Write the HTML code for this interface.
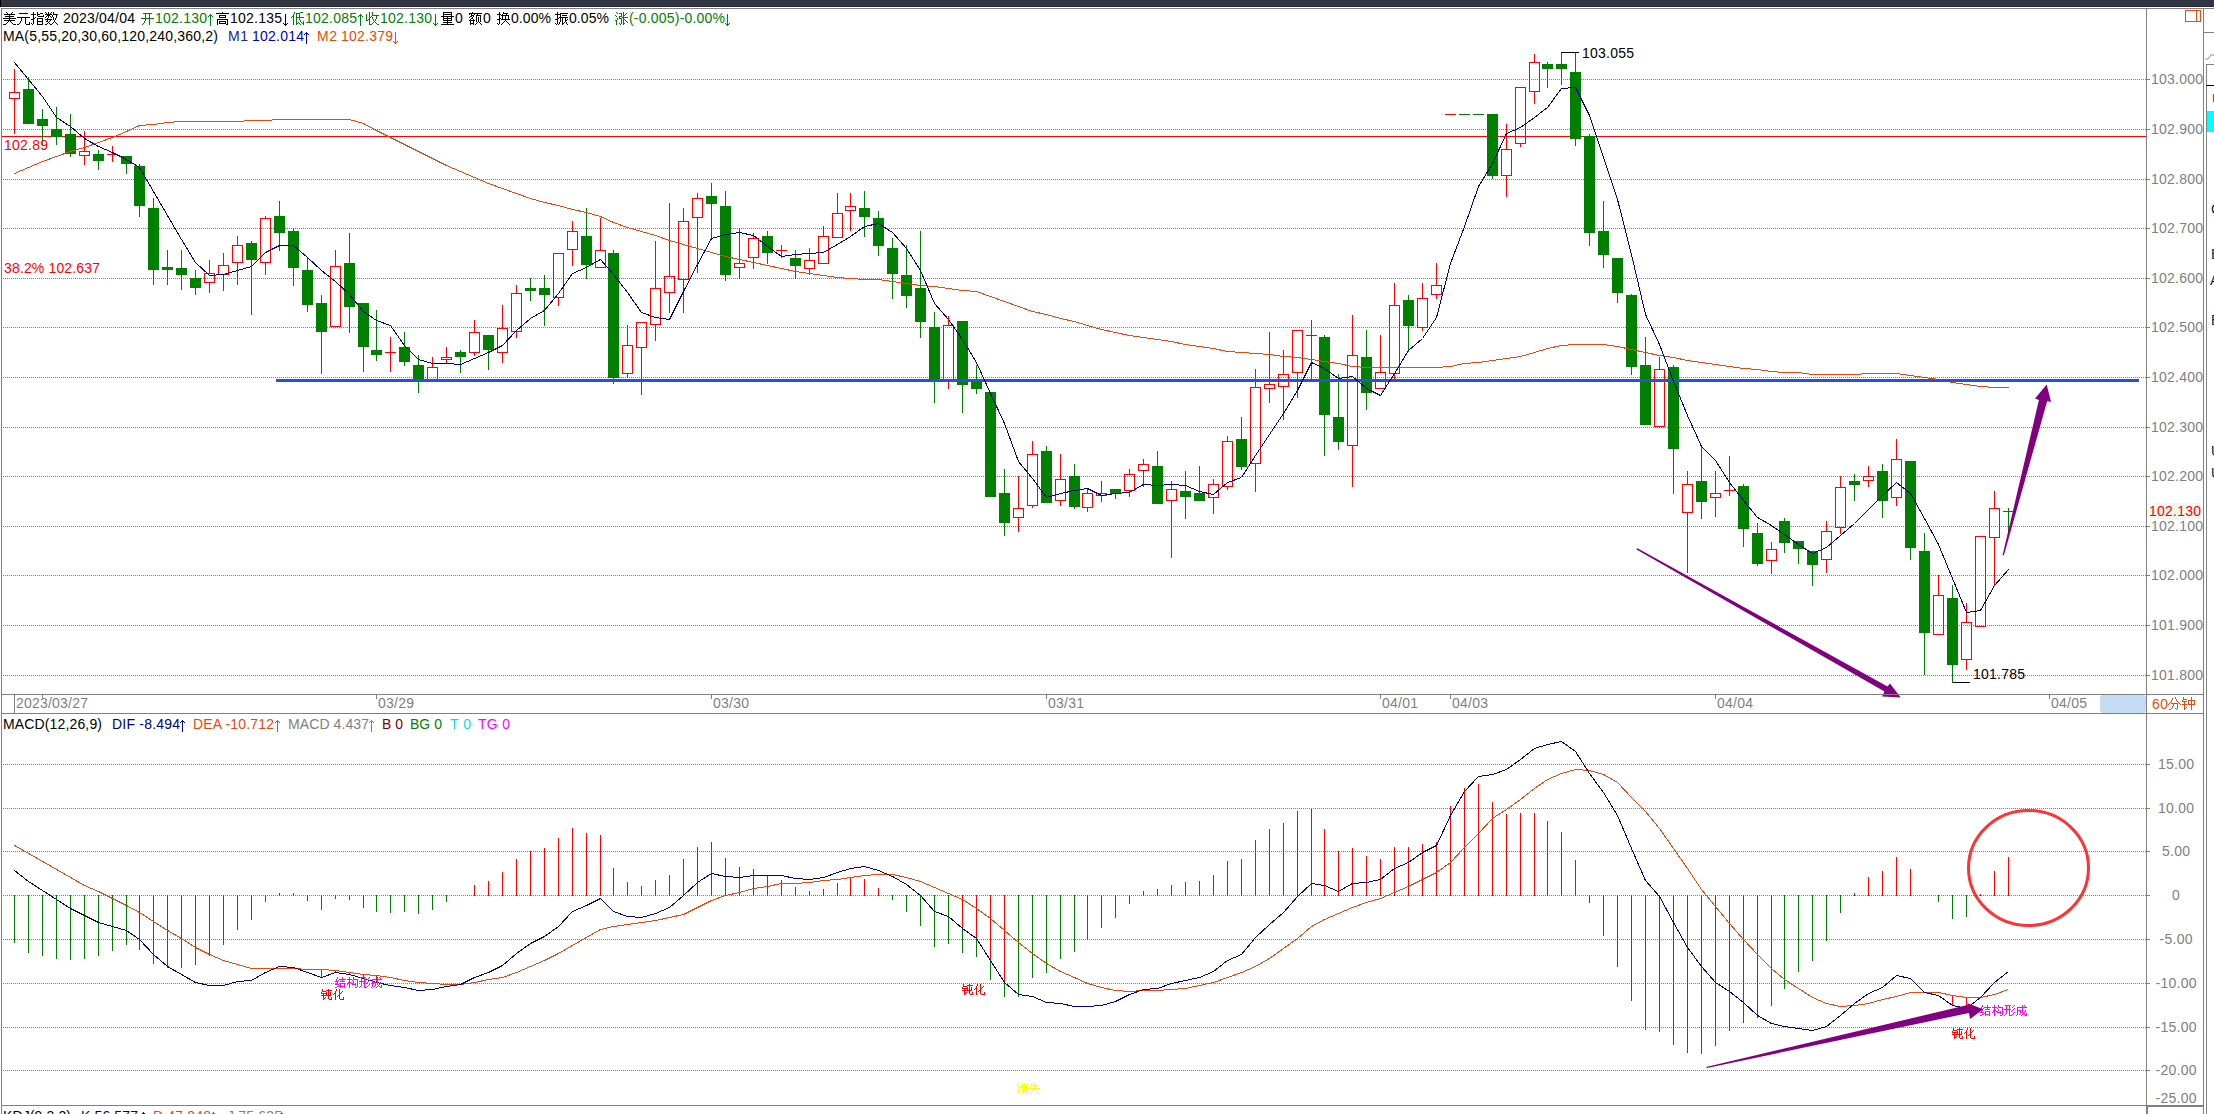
<!DOCTYPE html>
<html><head><meta charset="utf-8">
<style>
html,body{margin:0;padding:0;background:#fff;width:2214px;height:1114px;overflow:hidden}
svg{display:block;font-family:"Liberation Sans",sans-serif}
</style></head>
<body><svg width="2214" height="1114" viewBox="0 0 2214 1114">
<rect x="0" y="0" width="2214" height="1114" fill="#fff"/>
<rect x="0" y="0" width="2214" height="7" fill="#323642"/>
<rect x="0" y="6" width="2214" height="1" fill="#22252f"/>
<rect x="0" y="0" width="1" height="7" fill="#000000"/>
<rect x="1" y="8" width="2213" height="1" fill="#808080"/>
<rect x="1" y="8" width="1" height="1106" fill="#808080"/>
<rect x="2146" y="8" width="1" height="1106" fill="#808080"/>
<rect x="2203" y="8" width="1" height="1106" fill="#808080"/>
<rect x="2206" y="64" width="1" height="1050" fill="#808080"/>
<g stroke="#808080" stroke-width="1" stroke-dasharray="1 1" shape-rendering="crispEdges">
<line x1="3" y1="79.5" x2="2146" y2="79.5"/>
<line x1="3" y1="129.5" x2="2146" y2="129.5"/>
<line x1="3" y1="179.5" x2="2146" y2="179.5"/>
<line x1="3" y1="228.5" x2="2146" y2="228.5"/>
<line x1="3" y1="278.5" x2="2146" y2="278.5"/>
<line x1="3" y1="327.5" x2="2146" y2="327.5"/>
<line x1="3" y1="377.5" x2="2146" y2="377.5"/>
<line x1="3" y1="427.5" x2="2146" y2="427.5"/>
<line x1="3" y1="476.5" x2="2146" y2="476.5"/>
<line x1="3" y1="526.5" x2="2146" y2="526.5"/>
<line x1="3" y1="575.5" x2="2146" y2="575.5"/>
<line x1="3" y1="625.5" x2="2146" y2="625.5"/>
<line x1="3" y1="675.5" x2="2146" y2="675.5"/>
</g>
<rect x="2146" y="79" width="4" height="1" fill="#808080"/>
<rect x="2146" y="129" width="4" height="1" fill="#808080"/>
<rect x="2146" y="179" width="4" height="1" fill="#808080"/>
<rect x="2146" y="228" width="4" height="1" fill="#808080"/>
<rect x="2146" y="278" width="4" height="1" fill="#808080"/>
<rect x="2146" y="327" width="4" height="1" fill="#808080"/>
<rect x="2146" y="377" width="4" height="1" fill="#808080"/>
<rect x="2146" y="427" width="4" height="1" fill="#808080"/>
<rect x="2146" y="476" width="4" height="1" fill="#808080"/>
<rect x="2146" y="526" width="4" height="1" fill="#808080"/>
<rect x="2146" y="575" width="4" height="1" fill="#808080"/>
<rect x="2146" y="625" width="4" height="1" fill="#808080"/>
<rect x="2146" y="675" width="4" height="1" fill="#808080"/>
<rect x="2" y="136" width="2144" height="1" fill="#ff0000"/>
<g shape-rendering="crispEdges">
<rect x="14" y="69" width="1" height="23" fill="#ff0000"/>
<rect x="14" y="99" width="1" height="35" fill="#ff0000"/>
<rect x="9" y="92" width="11" height="1" fill="#ff0000"/>
<rect x="9" y="98" width="11" height="1" fill="#ff0000"/>
<rect x="9" y="92" width="1" height="7" fill="#ff0000"/>
<rect x="19" y="92" width="1" height="7" fill="#ff0000"/>
<rect x="28" y="77" width="1" height="12" fill="#008000"/>
<rect x="23" y="89" width="11" height="35" fill="#008000"/>
<rect x="42" y="109" width="1" height="10" fill="#008000"/>
<rect x="42" y="126" width="1" height="20" fill="#008000"/>
<rect x="37" y="119" width="11" height="7" fill="#008000"/>
<rect x="56" y="107" width="1" height="22" fill="#008000"/>
<rect x="56" y="137" width="1" height="8" fill="#008000"/>
<rect x="51" y="129" width="11" height="8" fill="#008000"/>
<rect x="70" y="114" width="1" height="20" fill="#008000"/>
<rect x="70" y="154" width="1" height="3" fill="#008000"/>
<rect x="65" y="134" width="11" height="20" fill="#008000"/>
<rect x="84" y="131" width="1" height="20" fill="#ff0000"/>
<rect x="84" y="156" width="1" height="9" fill="#ff0000"/>
<rect x="79" y="151" width="11" height="1" fill="#ff0000"/>
<rect x="79" y="155" width="11" height="1" fill="#ff0000"/>
<rect x="79" y="151" width="1" height="5" fill="#ff0000"/>
<rect x="89" y="151" width="1" height="5" fill="#ff0000"/>
<rect x="98" y="150" width="1" height="4" fill="#008000"/>
<rect x="98" y="161" width="1" height="9" fill="#008000"/>
<rect x="93" y="154" width="11" height="7" fill="#008000"/>
<rect x="112" y="146" width="1" height="8" fill="#ff0000"/>
<rect x="112" y="155" width="1" height="7" fill="#ff0000"/>
<rect x="107" y="154" width="11" height="1" fill="#ff0000"/>
<rect x="126" y="164" width="1" height="10" fill="#008000"/>
<rect x="121" y="156" width="11" height="8" fill="#008000"/>
<rect x="139" y="164" width="1" height="2" fill="#008000"/>
<rect x="139" y="206" width="1" height="11" fill="#008000"/>
<rect x="134" y="166" width="11" height="40" fill="#008000"/>
<rect x="153" y="198" width="1" height="10" fill="#008000"/>
<rect x="153" y="270" width="1" height="15" fill="#008000"/>
<rect x="148" y="208" width="11" height="62" fill="#008000"/>
<rect x="167" y="250" width="1" height="17" fill="#008000"/>
<rect x="167" y="270" width="1" height="15" fill="#008000"/>
<rect x="162" y="267" width="11" height="3" fill="#008000"/>
<rect x="181" y="250" width="1" height="18" fill="#008000"/>
<rect x="181" y="275" width="1" height="15" fill="#008000"/>
<rect x="176" y="268" width="11" height="7" fill="#008000"/>
<rect x="195" y="270" width="1" height="8" fill="#008000"/>
<rect x="195" y="288" width="1" height="7" fill="#008000"/>
<rect x="190" y="278" width="11" height="10" fill="#008000"/>
<rect x="209" y="260" width="1" height="13" fill="#ff0000"/>
<rect x="209" y="283" width="1" height="10" fill="#ff0000"/>
<rect x="204" y="273" width="11" height="1" fill="#ff0000"/>
<rect x="204" y="282" width="11" height="1" fill="#ff0000"/>
<rect x="204" y="273" width="1" height="10" fill="#ff0000"/>
<rect x="214" y="273" width="1" height="10" fill="#ff0000"/>
<rect x="223" y="253" width="1" height="12" fill="#ff0000"/>
<rect x="223" y="275" width="1" height="16" fill="#ff0000"/>
<rect x="218" y="265" width="11" height="1" fill="#ff0000"/>
<rect x="218" y="274" width="11" height="1" fill="#ff0000"/>
<rect x="218" y="265" width="1" height="10" fill="#ff0000"/>
<rect x="228" y="265" width="1" height="10" fill="#ff0000"/>
<rect x="237" y="236" width="1" height="9" fill="#ff0000"/>
<rect x="237" y="263" width="1" height="22" fill="#ff0000"/>
<rect x="232" y="245" width="11" height="1" fill="#ff0000"/>
<rect x="232" y="262" width="11" height="1" fill="#ff0000"/>
<rect x="232" y="245" width="1" height="18" fill="#ff0000"/>
<rect x="242" y="245" width="1" height="18" fill="#ff0000"/>
<rect x="251" y="241" width="1" height="2" fill="#008000"/>
<rect x="251" y="260" width="1" height="55" fill="#008000"/>
<rect x="246" y="243" width="11" height="17" fill="#008000"/>
<rect x="265" y="216" width="1" height="2" fill="#ff0000"/>
<rect x="265" y="263" width="1" height="12" fill="#ff0000"/>
<rect x="260" y="218" width="11" height="1" fill="#ff0000"/>
<rect x="260" y="262" width="11" height="1" fill="#ff0000"/>
<rect x="260" y="218" width="1" height="45" fill="#ff0000"/>
<rect x="270" y="218" width="1" height="45" fill="#ff0000"/>
<rect x="279" y="201" width="1" height="15" fill="#008000"/>
<rect x="279" y="233" width="1" height="18" fill="#008000"/>
<rect x="274" y="216" width="11" height="17" fill="#008000"/>
<rect x="293" y="228" width="1" height="3" fill="#008000"/>
<rect x="293" y="268" width="1" height="18" fill="#008000"/>
<rect x="288" y="231" width="11" height="37" fill="#008000"/>
<rect x="307" y="258" width="1" height="12" fill="#008000"/>
<rect x="307" y="305" width="1" height="7" fill="#008000"/>
<rect x="302" y="270" width="11" height="35" fill="#008000"/>
<rect x="321" y="295" width="1" height="8" fill="#008000"/>
<rect x="321" y="332" width="1" height="42" fill="#008000"/>
<rect x="316" y="303" width="11" height="29" fill="#008000"/>
<rect x="335" y="250" width="1" height="16" fill="#ff0000"/>
<rect x="330" y="266" width="11" height="1" fill="#ff0000"/>
<rect x="330" y="326" width="11" height="1" fill="#ff0000"/>
<rect x="330" y="266" width="1" height="61" fill="#ff0000"/>
<rect x="340" y="266" width="1" height="61" fill="#ff0000"/>
<rect x="349" y="233" width="1" height="30" fill="#008000"/>
<rect x="349" y="307" width="1" height="26" fill="#008000"/>
<rect x="344" y="263" width="11" height="44" fill="#008000"/>
<rect x="363" y="347" width="1" height="25" fill="#008000"/>
<rect x="358" y="303" width="11" height="44" fill="#008000"/>
<rect x="376" y="310" width="1" height="40" fill="#008000"/>
<rect x="376" y="355" width="1" height="6" fill="#008000"/>
<rect x="371" y="350" width="11" height="5" fill="#008000"/>
<rect x="390" y="337" width="1" height="15" fill="#ff0000"/>
<rect x="390" y="353" width="1" height="19" fill="#ff0000"/>
<rect x="385" y="352" width="11" height="1" fill="#ff0000"/>
<rect x="404" y="332" width="1" height="15" fill="#008000"/>
<rect x="404" y="362" width="1" height="4" fill="#008000"/>
<rect x="399" y="347" width="11" height="15" fill="#008000"/>
<rect x="418" y="355" width="1" height="10" fill="#008000"/>
<rect x="418" y="380" width="1" height="13" fill="#008000"/>
<rect x="413" y="365" width="11" height="15" fill="#008000"/>
<rect x="432" y="357" width="1" height="10" fill="#ff0000"/>
<rect x="427" y="367" width="11" height="1" fill="#ff0000"/>
<rect x="427" y="380" width="11" height="1" fill="#ff0000"/>
<rect x="427" y="367" width="1" height="14" fill="#ff0000"/>
<rect x="437" y="367" width="1" height="14" fill="#ff0000"/>
<rect x="446" y="347" width="1" height="10" fill="#ff0000"/>
<rect x="446" y="360" width="1" height="3" fill="#ff0000"/>
<rect x="441" y="357" width="11" height="1" fill="#ff0000"/>
<rect x="441" y="359" width="11" height="1" fill="#ff0000"/>
<rect x="441" y="357" width="1" height="3" fill="#ff0000"/>
<rect x="451" y="357" width="1" height="3" fill="#ff0000"/>
<rect x="460" y="350" width="1" height="2" fill="#008000"/>
<rect x="460" y="357" width="1" height="16" fill="#008000"/>
<rect x="455" y="352" width="11" height="5" fill="#008000"/>
<rect x="474" y="320" width="1" height="12" fill="#ff0000"/>
<rect x="474" y="353" width="1" height="3" fill="#ff0000"/>
<rect x="469" y="332" width="11" height="1" fill="#ff0000"/>
<rect x="469" y="352" width="11" height="1" fill="#ff0000"/>
<rect x="469" y="332" width="1" height="21" fill="#ff0000"/>
<rect x="479" y="332" width="1" height="21" fill="#ff0000"/>
<rect x="488" y="350" width="1" height="20" fill="#008000"/>
<rect x="483" y="335" width="11" height="15" fill="#008000"/>
<rect x="502" y="305" width="1" height="23" fill="#ff0000"/>
<rect x="502" y="353" width="1" height="10" fill="#ff0000"/>
<rect x="497" y="328" width="11" height="1" fill="#ff0000"/>
<rect x="497" y="352" width="11" height="1" fill="#ff0000"/>
<rect x="497" y="328" width="1" height="25" fill="#ff0000"/>
<rect x="507" y="328" width="1" height="25" fill="#ff0000"/>
<rect x="516" y="285" width="1" height="8" fill="#ff0000"/>
<rect x="516" y="332" width="1" height="6" fill="#ff0000"/>
<rect x="511" y="293" width="11" height="1" fill="#ff0000"/>
<rect x="511" y="331" width="11" height="1" fill="#ff0000"/>
<rect x="511" y="293" width="1" height="39" fill="#ff0000"/>
<rect x="521" y="293" width="1" height="39" fill="#ff0000"/>
<rect x="530" y="278" width="1" height="10" fill="#008000"/>
<rect x="530" y="291" width="1" height="10" fill="#008000"/>
<rect x="525" y="288" width="11" height="3" fill="#008000"/>
<rect x="544" y="275" width="1" height="13" fill="#008000"/>
<rect x="544" y="295" width="1" height="31" fill="#008000"/>
<rect x="539" y="288" width="11" height="7" fill="#008000"/>
<rect x="558" y="298" width="1" height="8" fill="#ff0000"/>
<rect x="553" y="253" width="11" height="1" fill="#ff0000"/>
<rect x="553" y="297" width="11" height="1" fill="#ff0000"/>
<rect x="553" y="253" width="1" height="45" fill="#ff0000"/>
<rect x="563" y="253" width="1" height="45" fill="#ff0000"/>
<rect x="572" y="221" width="1" height="10" fill="#ff0000"/>
<rect x="572" y="250" width="1" height="16" fill="#ff0000"/>
<rect x="567" y="231" width="11" height="1" fill="#ff0000"/>
<rect x="567" y="249" width="11" height="1" fill="#ff0000"/>
<rect x="567" y="231" width="1" height="19" fill="#ff0000"/>
<rect x="577" y="231" width="1" height="19" fill="#ff0000"/>
<rect x="586" y="208" width="1" height="28" fill="#008000"/>
<rect x="586" y="265" width="1" height="14" fill="#008000"/>
<rect x="581" y="236" width="11" height="29" fill="#008000"/>
<rect x="600" y="218" width="1" height="32" fill="#ff0000"/>
<rect x="595" y="250" width="11" height="1" fill="#ff0000"/>
<rect x="595" y="267" width="11" height="1" fill="#ff0000"/>
<rect x="595" y="250" width="1" height="18" fill="#ff0000"/>
<rect x="605" y="250" width="1" height="18" fill="#ff0000"/>
<rect x="613" y="250" width="1" height="3" fill="#008000"/>
<rect x="613" y="378" width="1" height="6" fill="#008000"/>
<rect x="608" y="253" width="11" height="125" fill="#008000"/>
<rect x="627" y="325" width="1" height="20" fill="#ff0000"/>
<rect x="627" y="374" width="1" height="4" fill="#ff0000"/>
<rect x="622" y="345" width="11" height="1" fill="#ff0000"/>
<rect x="622" y="373" width="11" height="1" fill="#ff0000"/>
<rect x="622" y="345" width="1" height="29" fill="#ff0000"/>
<rect x="632" y="345" width="1" height="29" fill="#ff0000"/>
<rect x="641" y="348" width="1" height="47" fill="#ff0000"/>
<rect x="636" y="322" width="11" height="1" fill="#ff0000"/>
<rect x="636" y="347" width="11" height="1" fill="#ff0000"/>
<rect x="636" y="322" width="1" height="26" fill="#ff0000"/>
<rect x="646" y="322" width="1" height="26" fill="#ff0000"/>
<rect x="655" y="241" width="1" height="47" fill="#ff0000"/>
<rect x="655" y="325" width="1" height="16" fill="#ff0000"/>
<rect x="650" y="288" width="11" height="1" fill="#ff0000"/>
<rect x="650" y="324" width="11" height="1" fill="#ff0000"/>
<rect x="650" y="288" width="1" height="37" fill="#ff0000"/>
<rect x="660" y="288" width="1" height="37" fill="#ff0000"/>
<rect x="669" y="203" width="1" height="73" fill="#ff0000"/>
<rect x="669" y="293" width="1" height="20" fill="#ff0000"/>
<rect x="664" y="276" width="11" height="1" fill="#ff0000"/>
<rect x="664" y="292" width="11" height="1" fill="#ff0000"/>
<rect x="664" y="276" width="1" height="17" fill="#ff0000"/>
<rect x="674" y="276" width="1" height="17" fill="#ff0000"/>
<rect x="683" y="208" width="1" height="13" fill="#ff0000"/>
<rect x="683" y="280" width="1" height="33" fill="#ff0000"/>
<rect x="678" y="221" width="11" height="1" fill="#ff0000"/>
<rect x="678" y="279" width="11" height="1" fill="#ff0000"/>
<rect x="678" y="221" width="1" height="59" fill="#ff0000"/>
<rect x="688" y="221" width="1" height="59" fill="#ff0000"/>
<rect x="697" y="193" width="1" height="5" fill="#ff0000"/>
<rect x="697" y="218" width="1" height="55" fill="#ff0000"/>
<rect x="692" y="198" width="11" height="1" fill="#ff0000"/>
<rect x="692" y="217" width="11" height="1" fill="#ff0000"/>
<rect x="692" y="198" width="1" height="20" fill="#ff0000"/>
<rect x="702" y="198" width="1" height="20" fill="#ff0000"/>
<rect x="711" y="183" width="1" height="13" fill="#008000"/>
<rect x="711" y="204" width="1" height="34" fill="#008000"/>
<rect x="706" y="196" width="11" height="8" fill="#008000"/>
<rect x="725" y="191" width="1" height="15" fill="#008000"/>
<rect x="725" y="275" width="1" height="6" fill="#008000"/>
<rect x="720" y="206" width="11" height="69" fill="#008000"/>
<rect x="739" y="228" width="1" height="35" fill="#ff0000"/>
<rect x="739" y="268" width="1" height="11" fill="#ff0000"/>
<rect x="734" y="263" width="11" height="1" fill="#ff0000"/>
<rect x="734" y="267" width="11" height="1" fill="#ff0000"/>
<rect x="734" y="263" width="1" height="5" fill="#ff0000"/>
<rect x="744" y="263" width="1" height="5" fill="#ff0000"/>
<rect x="753" y="233" width="1" height="5" fill="#ff0000"/>
<rect x="753" y="258" width="1" height="11" fill="#ff0000"/>
<rect x="748" y="238" width="11" height="1" fill="#ff0000"/>
<rect x="748" y="257" width="11" height="1" fill="#ff0000"/>
<rect x="748" y="238" width="1" height="20" fill="#ff0000"/>
<rect x="758" y="238" width="1" height="20" fill="#ff0000"/>
<rect x="767" y="231" width="1" height="5" fill="#008000"/>
<rect x="767" y="253" width="1" height="11" fill="#008000"/>
<rect x="762" y="236" width="11" height="17" fill="#008000"/>
<rect x="781" y="245" width="1" height="5" fill="#ff0000"/>
<rect x="781" y="251" width="1" height="7" fill="#ff0000"/>
<rect x="776" y="250" width="11" height="1" fill="#ff0000"/>
<rect x="795" y="250" width="1" height="8" fill="#008000"/>
<rect x="795" y="266" width="1" height="13" fill="#008000"/>
<rect x="790" y="258" width="11" height="8" fill="#008000"/>
<rect x="809" y="248" width="1" height="12" fill="#ff0000"/>
<rect x="809" y="269" width="1" height="6" fill="#ff0000"/>
<rect x="804" y="260" width="11" height="1" fill="#ff0000"/>
<rect x="804" y="268" width="11" height="1" fill="#ff0000"/>
<rect x="804" y="260" width="1" height="9" fill="#ff0000"/>
<rect x="814" y="260" width="1" height="9" fill="#ff0000"/>
<rect x="823" y="226" width="1" height="10" fill="#ff0000"/>
<rect x="818" y="236" width="11" height="1" fill="#ff0000"/>
<rect x="818" y="263" width="11" height="1" fill="#ff0000"/>
<rect x="818" y="236" width="1" height="28" fill="#ff0000"/>
<rect x="828" y="236" width="1" height="28" fill="#ff0000"/>
<rect x="837" y="193" width="1" height="20" fill="#ff0000"/>
<rect x="832" y="213" width="11" height="1" fill="#ff0000"/>
<rect x="832" y="237" width="11" height="1" fill="#ff0000"/>
<rect x="832" y="213" width="1" height="25" fill="#ff0000"/>
<rect x="842" y="213" width="1" height="25" fill="#ff0000"/>
<rect x="850" y="193" width="1" height="13" fill="#ff0000"/>
<rect x="850" y="211" width="1" height="20" fill="#ff0000"/>
<rect x="845" y="206" width="11" height="1" fill="#ff0000"/>
<rect x="845" y="210" width="11" height="1" fill="#ff0000"/>
<rect x="845" y="206" width="1" height="5" fill="#ff0000"/>
<rect x="855" y="206" width="1" height="5" fill="#ff0000"/>
<rect x="864" y="191" width="1" height="17" fill="#008000"/>
<rect x="864" y="217" width="1" height="20" fill="#008000"/>
<rect x="859" y="208" width="11" height="9" fill="#008000"/>
<rect x="878" y="211" width="1" height="7" fill="#008000"/>
<rect x="878" y="246" width="1" height="10" fill="#008000"/>
<rect x="873" y="218" width="11" height="28" fill="#008000"/>
<rect x="892" y="238" width="1" height="10" fill="#008000"/>
<rect x="892" y="274" width="1" height="25" fill="#008000"/>
<rect x="887" y="248" width="11" height="26" fill="#008000"/>
<rect x="906" y="245" width="1" height="30" fill="#008000"/>
<rect x="906" y="296" width="1" height="12" fill="#008000"/>
<rect x="901" y="275" width="11" height="21" fill="#008000"/>
<rect x="920" y="231" width="1" height="57" fill="#008000"/>
<rect x="920" y="322" width="1" height="16" fill="#008000"/>
<rect x="915" y="288" width="11" height="34" fill="#008000"/>
<rect x="934" y="312" width="1" height="15" fill="#008000"/>
<rect x="934" y="380" width="1" height="23" fill="#008000"/>
<rect x="929" y="327" width="11" height="53" fill="#008000"/>
<rect x="948" y="316" width="1" height="9" fill="#ff0000"/>
<rect x="948" y="380" width="1" height="9" fill="#ff0000"/>
<rect x="943" y="325" width="11" height="1" fill="#ff0000"/>
<rect x="943" y="379" width="11" height="1" fill="#ff0000"/>
<rect x="943" y="325" width="1" height="55" fill="#ff0000"/>
<rect x="953" y="325" width="1" height="55" fill="#ff0000"/>
<rect x="962" y="385" width="1" height="28" fill="#008000"/>
<rect x="957" y="321" width="11" height="64" fill="#008000"/>
<rect x="976" y="365" width="1" height="14" fill="#008000"/>
<rect x="976" y="389" width="1" height="5" fill="#008000"/>
<rect x="971" y="379" width="11" height="10" fill="#008000"/>
<rect x="985" y="392" width="11" height="105" fill="#008000"/>
<rect x="1004" y="469" width="1" height="24" fill="#008000"/>
<rect x="1004" y="523" width="1" height="13" fill="#008000"/>
<rect x="999" y="493" width="11" height="30" fill="#008000"/>
<rect x="1018" y="476" width="1" height="32" fill="#ff0000"/>
<rect x="1018" y="518" width="1" height="14" fill="#ff0000"/>
<rect x="1013" y="508" width="11" height="1" fill="#ff0000"/>
<rect x="1013" y="517" width="11" height="1" fill="#ff0000"/>
<rect x="1013" y="508" width="1" height="10" fill="#ff0000"/>
<rect x="1023" y="508" width="1" height="10" fill="#ff0000"/>
<rect x="1032" y="441" width="1" height="13" fill="#ff0000"/>
<rect x="1032" y="506" width="1" height="2" fill="#ff0000"/>
<rect x="1027" y="454" width="11" height="1" fill="#ff0000"/>
<rect x="1027" y="505" width="11" height="1" fill="#ff0000"/>
<rect x="1027" y="454" width="1" height="52" fill="#ff0000"/>
<rect x="1037" y="454" width="1" height="52" fill="#ff0000"/>
<rect x="1046" y="446" width="1" height="5" fill="#008000"/>
<rect x="1041" y="451" width="11" height="52" fill="#008000"/>
<rect x="1060" y="454" width="1" height="25" fill="#ff0000"/>
<rect x="1060" y="501" width="1" height="5" fill="#ff0000"/>
<rect x="1055" y="479" width="11" height="1" fill="#ff0000"/>
<rect x="1055" y="500" width="11" height="1" fill="#ff0000"/>
<rect x="1055" y="479" width="1" height="22" fill="#ff0000"/>
<rect x="1065" y="479" width="1" height="22" fill="#ff0000"/>
<rect x="1074" y="464" width="1" height="12" fill="#008000"/>
<rect x="1074" y="507" width="1" height="2" fill="#008000"/>
<rect x="1069" y="476" width="11" height="31" fill="#008000"/>
<rect x="1087" y="489" width="1" height="4" fill="#ff0000"/>
<rect x="1087" y="508" width="1" height="4" fill="#ff0000"/>
<rect x="1082" y="493" width="11" height="1" fill="#ff0000"/>
<rect x="1082" y="507" width="11" height="1" fill="#ff0000"/>
<rect x="1082" y="493" width="1" height="15" fill="#ff0000"/>
<rect x="1092" y="493" width="1" height="15" fill="#ff0000"/>
<rect x="1101" y="481" width="1" height="12" fill="#ff0000"/>
<rect x="1101" y="496" width="1" height="6" fill="#ff0000"/>
<rect x="1096" y="493" width="11" height="1" fill="#ff0000"/>
<rect x="1096" y="495" width="11" height="1" fill="#ff0000"/>
<rect x="1096" y="493" width="1" height="3" fill="#ff0000"/>
<rect x="1106" y="493" width="1" height="3" fill="#ff0000"/>
<rect x="1115" y="494" width="1" height="5" fill="#008000"/>
<rect x="1110" y="489" width="11" height="5" fill="#008000"/>
<rect x="1129" y="469" width="1" height="5" fill="#ff0000"/>
<rect x="1129" y="491" width="1" height="6" fill="#ff0000"/>
<rect x="1124" y="474" width="11" height="1" fill="#ff0000"/>
<rect x="1124" y="490" width="11" height="1" fill="#ff0000"/>
<rect x="1124" y="474" width="1" height="17" fill="#ff0000"/>
<rect x="1134" y="474" width="1" height="17" fill="#ff0000"/>
<rect x="1143" y="459" width="1" height="5" fill="#ff0000"/>
<rect x="1143" y="471" width="1" height="16" fill="#ff0000"/>
<rect x="1138" y="464" width="11" height="1" fill="#ff0000"/>
<rect x="1138" y="470" width="11" height="1" fill="#ff0000"/>
<rect x="1138" y="464" width="1" height="7" fill="#ff0000"/>
<rect x="1148" y="464" width="1" height="7" fill="#ff0000"/>
<rect x="1157" y="451" width="1" height="15" fill="#008000"/>
<rect x="1152" y="466" width="11" height="38" fill="#008000"/>
<rect x="1171" y="481" width="1" height="8" fill="#ff0000"/>
<rect x="1171" y="501" width="1" height="57" fill="#ff0000"/>
<rect x="1166" y="489" width="11" height="1" fill="#ff0000"/>
<rect x="1166" y="500" width="11" height="1" fill="#ff0000"/>
<rect x="1166" y="489" width="1" height="12" fill="#ff0000"/>
<rect x="1176" y="489" width="1" height="12" fill="#ff0000"/>
<rect x="1185" y="471" width="1" height="20" fill="#008000"/>
<rect x="1185" y="497" width="1" height="22" fill="#008000"/>
<rect x="1180" y="491" width="11" height="6" fill="#008000"/>
<rect x="1199" y="466" width="1" height="27" fill="#008000"/>
<rect x="1194" y="493" width="11" height="8" fill="#008000"/>
<rect x="1213" y="479" width="1" height="5" fill="#ff0000"/>
<rect x="1213" y="498" width="1" height="16" fill="#ff0000"/>
<rect x="1208" y="484" width="11" height="1" fill="#ff0000"/>
<rect x="1208" y="497" width="11" height="1" fill="#ff0000"/>
<rect x="1208" y="484" width="1" height="14" fill="#ff0000"/>
<rect x="1218" y="484" width="1" height="14" fill="#ff0000"/>
<rect x="1227" y="436" width="1" height="5" fill="#ff0000"/>
<rect x="1227" y="487" width="1" height="3" fill="#ff0000"/>
<rect x="1222" y="441" width="11" height="1" fill="#ff0000"/>
<rect x="1222" y="486" width="11" height="1" fill="#ff0000"/>
<rect x="1222" y="441" width="1" height="46" fill="#ff0000"/>
<rect x="1232" y="441" width="1" height="46" fill="#ff0000"/>
<rect x="1241" y="417" width="1" height="22" fill="#008000"/>
<rect x="1241" y="467" width="1" height="3" fill="#008000"/>
<rect x="1236" y="439" width="11" height="28" fill="#008000"/>
<rect x="1255" y="369" width="1" height="18" fill="#ff0000"/>
<rect x="1255" y="464" width="1" height="28" fill="#ff0000"/>
<rect x="1250" y="387" width="11" height="1" fill="#ff0000"/>
<rect x="1250" y="463" width="11" height="1" fill="#ff0000"/>
<rect x="1250" y="387" width="1" height="77" fill="#ff0000"/>
<rect x="1260" y="387" width="1" height="77" fill="#ff0000"/>
<rect x="1269" y="332" width="1" height="52" fill="#ff0000"/>
<rect x="1269" y="389" width="1" height="14" fill="#ff0000"/>
<rect x="1264" y="384" width="11" height="1" fill="#ff0000"/>
<rect x="1264" y="388" width="11" height="1" fill="#ff0000"/>
<rect x="1264" y="384" width="1" height="5" fill="#ff0000"/>
<rect x="1274" y="384" width="1" height="5" fill="#ff0000"/>
<rect x="1283" y="350" width="1" height="24" fill="#ff0000"/>
<rect x="1283" y="387" width="1" height="33" fill="#ff0000"/>
<rect x="1278" y="374" width="11" height="1" fill="#ff0000"/>
<rect x="1278" y="386" width="11" height="1" fill="#ff0000"/>
<rect x="1278" y="374" width="1" height="13" fill="#ff0000"/>
<rect x="1288" y="374" width="1" height="13" fill="#ff0000"/>
<rect x="1297" y="373" width="1" height="25" fill="#ff0000"/>
<rect x="1292" y="330" width="11" height="1" fill="#ff0000"/>
<rect x="1292" y="372" width="11" height="1" fill="#ff0000"/>
<rect x="1292" y="330" width="1" height="43" fill="#ff0000"/>
<rect x="1302" y="330" width="1" height="43" fill="#ff0000"/>
<rect x="1311" y="320" width="1" height="15" fill="#008000"/>
<rect x="1311" y="336" width="1" height="44" fill="#008000"/>
<rect x="1306" y="335" width="11" height="1" fill="#008000"/>
<rect x="1324" y="335" width="1" height="2" fill="#008000"/>
<rect x="1324" y="415" width="1" height="41" fill="#008000"/>
<rect x="1319" y="337" width="11" height="78" fill="#008000"/>
<rect x="1338" y="374" width="1" height="43" fill="#008000"/>
<rect x="1338" y="442" width="1" height="8" fill="#008000"/>
<rect x="1333" y="417" width="11" height="25" fill="#008000"/>
<rect x="1352" y="315" width="1" height="40" fill="#ff0000"/>
<rect x="1352" y="446" width="1" height="41" fill="#ff0000"/>
<rect x="1347" y="355" width="11" height="1" fill="#ff0000"/>
<rect x="1347" y="445" width="11" height="1" fill="#ff0000"/>
<rect x="1347" y="355" width="1" height="91" fill="#ff0000"/>
<rect x="1357" y="355" width="1" height="91" fill="#ff0000"/>
<rect x="1366" y="330" width="1" height="27" fill="#008000"/>
<rect x="1366" y="393" width="1" height="17" fill="#008000"/>
<rect x="1361" y="357" width="11" height="36" fill="#008000"/>
<rect x="1380" y="335" width="1" height="37" fill="#ff0000"/>
<rect x="1375" y="372" width="11" height="1" fill="#ff0000"/>
<rect x="1375" y="388" width="11" height="1" fill="#ff0000"/>
<rect x="1375" y="372" width="1" height="17" fill="#ff0000"/>
<rect x="1385" y="372" width="1" height="17" fill="#ff0000"/>
<rect x="1394" y="283" width="1" height="22" fill="#ff0000"/>
<rect x="1394" y="374" width="1" height="5" fill="#ff0000"/>
<rect x="1389" y="305" width="11" height="1" fill="#ff0000"/>
<rect x="1389" y="373" width="11" height="1" fill="#ff0000"/>
<rect x="1389" y="305" width="1" height="69" fill="#ff0000"/>
<rect x="1399" y="305" width="1" height="69" fill="#ff0000"/>
<rect x="1408" y="295" width="1" height="5" fill="#008000"/>
<rect x="1408" y="326" width="1" height="26" fill="#008000"/>
<rect x="1403" y="300" width="11" height="26" fill="#008000"/>
<rect x="1422" y="283" width="1" height="15" fill="#ff0000"/>
<rect x="1422" y="328" width="1" height="3" fill="#ff0000"/>
<rect x="1417" y="298" width="11" height="1" fill="#ff0000"/>
<rect x="1417" y="327" width="11" height="1" fill="#ff0000"/>
<rect x="1417" y="298" width="1" height="30" fill="#ff0000"/>
<rect x="1427" y="298" width="1" height="30" fill="#ff0000"/>
<rect x="1436" y="263" width="1" height="22" fill="#ff0000"/>
<rect x="1436" y="295" width="1" height="4" fill="#ff0000"/>
<rect x="1431" y="285" width="11" height="1" fill="#ff0000"/>
<rect x="1431" y="294" width="11" height="1" fill="#ff0000"/>
<rect x="1431" y="285" width="1" height="10" fill="#ff0000"/>
<rect x="1441" y="285" width="1" height="10" fill="#ff0000"/>
<rect x="1445" y="114" width="11" height="1" fill="#ff0000"/>
<rect x="1459" y="114" width="11" height="1" fill="#008000"/>
<rect x="1473" y="114" width="11" height="1" fill="#008000"/>
<rect x="1492" y="176" width="1" height="3" fill="#008000"/>
<rect x="1487" y="114" width="11" height="62" fill="#008000"/>
<rect x="1506" y="124" width="1" height="25" fill="#ff0000"/>
<rect x="1506" y="176" width="1" height="21" fill="#ff0000"/>
<rect x="1501" y="149" width="11" height="1" fill="#ff0000"/>
<rect x="1501" y="175" width="11" height="1" fill="#ff0000"/>
<rect x="1501" y="149" width="1" height="27" fill="#ff0000"/>
<rect x="1511" y="149" width="1" height="27" fill="#ff0000"/>
<rect x="1520" y="144" width="1" height="3" fill="#ff0000"/>
<rect x="1515" y="87" width="11" height="1" fill="#ff0000"/>
<rect x="1515" y="143" width="11" height="1" fill="#ff0000"/>
<rect x="1515" y="87" width="1" height="57" fill="#ff0000"/>
<rect x="1525" y="87" width="1" height="57" fill="#ff0000"/>
<rect x="1534" y="54" width="1" height="8" fill="#ff0000"/>
<rect x="1534" y="92" width="1" height="12" fill="#ff0000"/>
<rect x="1529" y="62" width="11" height="1" fill="#ff0000"/>
<rect x="1529" y="91" width="11" height="1" fill="#ff0000"/>
<rect x="1529" y="62" width="1" height="30" fill="#ff0000"/>
<rect x="1539" y="62" width="1" height="30" fill="#ff0000"/>
<rect x="1547" y="62" width="1" height="2" fill="#008000"/>
<rect x="1547" y="69" width="1" height="19" fill="#008000"/>
<rect x="1542" y="64" width="11" height="5" fill="#008000"/>
<rect x="1561" y="52" width="1" height="12" fill="#008000"/>
<rect x="1561" y="69" width="1" height="16" fill="#008000"/>
<rect x="1556" y="64" width="11" height="5" fill="#008000"/>
<rect x="1575" y="52" width="1" height="20" fill="#008000"/>
<rect x="1575" y="139" width="1" height="7" fill="#008000"/>
<rect x="1570" y="72" width="11" height="67" fill="#008000"/>
<rect x="1589" y="134" width="1" height="2" fill="#008000"/>
<rect x="1589" y="233" width="1" height="13" fill="#008000"/>
<rect x="1584" y="136" width="11" height="97" fill="#008000"/>
<rect x="1603" y="201" width="1" height="30" fill="#008000"/>
<rect x="1603" y="255" width="1" height="13" fill="#008000"/>
<rect x="1598" y="231" width="11" height="24" fill="#008000"/>
<rect x="1617" y="293" width="1" height="10" fill="#008000"/>
<rect x="1612" y="258" width="11" height="35" fill="#008000"/>
<rect x="1631" y="294" width="1" height="1" fill="#008000"/>
<rect x="1631" y="367" width="1" height="8" fill="#008000"/>
<rect x="1626" y="295" width="11" height="72" fill="#008000"/>
<rect x="1645" y="337" width="1" height="28" fill="#008000"/>
<rect x="1640" y="365" width="11" height="60" fill="#008000"/>
<rect x="1659" y="357" width="1" height="12" fill="#ff0000"/>
<rect x="1654" y="369" width="11" height="1" fill="#ff0000"/>
<rect x="1654" y="426" width="11" height="1" fill="#ff0000"/>
<rect x="1654" y="369" width="1" height="58" fill="#ff0000"/>
<rect x="1664" y="369" width="1" height="58" fill="#ff0000"/>
<rect x="1673" y="365" width="1" height="2" fill="#008000"/>
<rect x="1673" y="449" width="1" height="45" fill="#008000"/>
<rect x="1668" y="367" width="11" height="82" fill="#008000"/>
<rect x="1687" y="471" width="1" height="13" fill="#ff0000"/>
<rect x="1687" y="513" width="1" height="60" fill="#ff0000"/>
<rect x="1682" y="484" width="11" height="1" fill="#ff0000"/>
<rect x="1682" y="512" width="11" height="1" fill="#ff0000"/>
<rect x="1682" y="484" width="1" height="29" fill="#ff0000"/>
<rect x="1692" y="484" width="1" height="29" fill="#ff0000"/>
<rect x="1701" y="445" width="1" height="36" fill="#008000"/>
<rect x="1701" y="502" width="1" height="17" fill="#008000"/>
<rect x="1696" y="481" width="11" height="21" fill="#008000"/>
<rect x="1715" y="471" width="1" height="22" fill="#ff0000"/>
<rect x="1715" y="498" width="1" height="19" fill="#ff0000"/>
<rect x="1710" y="493" width="11" height="1" fill="#ff0000"/>
<rect x="1710" y="497" width="11" height="1" fill="#ff0000"/>
<rect x="1710" y="493" width="1" height="5" fill="#ff0000"/>
<rect x="1720" y="493" width="1" height="5" fill="#ff0000"/>
<rect x="1729" y="456" width="1" height="34" fill="#ff0000"/>
<rect x="1729" y="491" width="1" height="5" fill="#ff0000"/>
<rect x="1724" y="490" width="11" height="1" fill="#ff0000"/>
<rect x="1743" y="484" width="1" height="2" fill="#008000"/>
<rect x="1743" y="529" width="1" height="18" fill="#008000"/>
<rect x="1738" y="486" width="11" height="43" fill="#008000"/>
<rect x="1757" y="523" width="1" height="10" fill="#008000"/>
<rect x="1757" y="564" width="1" height="2" fill="#008000"/>
<rect x="1752" y="533" width="11" height="31" fill="#008000"/>
<rect x="1771" y="542" width="1" height="7" fill="#ff0000"/>
<rect x="1771" y="561" width="1" height="13" fill="#ff0000"/>
<rect x="1766" y="549" width="11" height="1" fill="#ff0000"/>
<rect x="1766" y="560" width="11" height="1" fill="#ff0000"/>
<rect x="1766" y="549" width="1" height="12" fill="#ff0000"/>
<rect x="1776" y="549" width="1" height="12" fill="#ff0000"/>
<rect x="1784" y="518" width="1" height="3" fill="#008000"/>
<rect x="1784" y="543" width="1" height="10" fill="#008000"/>
<rect x="1779" y="521" width="11" height="22" fill="#008000"/>
<rect x="1798" y="549" width="1" height="15" fill="#008000"/>
<rect x="1793" y="541" width="11" height="8" fill="#008000"/>
<rect x="1812" y="565" width="1" height="21" fill="#008000"/>
<rect x="1807" y="551" width="11" height="14" fill="#008000"/>
<rect x="1826" y="521" width="1" height="10" fill="#ff0000"/>
<rect x="1826" y="560" width="1" height="13" fill="#ff0000"/>
<rect x="1821" y="531" width="11" height="1" fill="#ff0000"/>
<rect x="1821" y="559" width="11" height="1" fill="#ff0000"/>
<rect x="1821" y="531" width="1" height="29" fill="#ff0000"/>
<rect x="1831" y="531" width="1" height="29" fill="#ff0000"/>
<rect x="1840" y="476" width="1" height="11" fill="#ff0000"/>
<rect x="1840" y="528" width="1" height="6" fill="#ff0000"/>
<rect x="1835" y="487" width="11" height="1" fill="#ff0000"/>
<rect x="1835" y="527" width="11" height="1" fill="#ff0000"/>
<rect x="1835" y="487" width="1" height="41" fill="#ff0000"/>
<rect x="1845" y="487" width="1" height="41" fill="#ff0000"/>
<rect x="1854" y="474" width="1" height="7" fill="#008000"/>
<rect x="1854" y="485" width="1" height="16" fill="#008000"/>
<rect x="1849" y="481" width="11" height="4" fill="#008000"/>
<rect x="1868" y="466" width="1" height="10" fill="#ff0000"/>
<rect x="1868" y="481" width="1" height="6" fill="#ff0000"/>
<rect x="1863" y="476" width="11" height="1" fill="#ff0000"/>
<rect x="1863" y="480" width="11" height="1" fill="#ff0000"/>
<rect x="1863" y="476" width="1" height="5" fill="#ff0000"/>
<rect x="1873" y="476" width="1" height="5" fill="#ff0000"/>
<rect x="1882" y="464" width="1" height="7" fill="#008000"/>
<rect x="1882" y="501" width="1" height="17" fill="#008000"/>
<rect x="1877" y="471" width="11" height="30" fill="#008000"/>
<rect x="1896" y="439" width="1" height="20" fill="#ff0000"/>
<rect x="1896" y="498" width="1" height="8" fill="#ff0000"/>
<rect x="1891" y="459" width="11" height="1" fill="#ff0000"/>
<rect x="1891" y="497" width="11" height="1" fill="#ff0000"/>
<rect x="1891" y="459" width="1" height="39" fill="#ff0000"/>
<rect x="1901" y="459" width="1" height="39" fill="#ff0000"/>
<rect x="1910" y="548" width="1" height="12" fill="#008000"/>
<rect x="1905" y="461" width="11" height="87" fill="#008000"/>
<rect x="1924" y="533" width="1" height="18" fill="#008000"/>
<rect x="1924" y="633" width="1" height="42" fill="#008000"/>
<rect x="1919" y="551" width="11" height="82" fill="#008000"/>
<rect x="1938" y="575" width="1" height="20" fill="#ff0000"/>
<rect x="1933" y="595" width="11" height="1" fill="#ff0000"/>
<rect x="1933" y="634" width="11" height="1" fill="#ff0000"/>
<rect x="1933" y="595" width="1" height="40" fill="#ff0000"/>
<rect x="1943" y="595" width="1" height="40" fill="#ff0000"/>
<rect x="1952" y="585" width="1" height="13" fill="#008000"/>
<rect x="1952" y="665" width="1" height="18" fill="#008000"/>
<rect x="1947" y="598" width="11" height="67" fill="#008000"/>
<rect x="1966" y="603" width="1" height="19" fill="#ff0000"/>
<rect x="1966" y="660" width="1" height="10" fill="#ff0000"/>
<rect x="1961" y="622" width="11" height="1" fill="#ff0000"/>
<rect x="1961" y="659" width="11" height="1" fill="#ff0000"/>
<rect x="1961" y="622" width="1" height="38" fill="#ff0000"/>
<rect x="1971" y="622" width="1" height="38" fill="#ff0000"/>
<rect x="1975" y="536" width="11" height="1" fill="#ff0000"/>
<rect x="1975" y="626" width="11" height="1" fill="#ff0000"/>
<rect x="1975" y="536" width="1" height="91" fill="#ff0000"/>
<rect x="1985" y="536" width="1" height="91" fill="#ff0000"/>
<rect x="1994" y="491" width="1" height="17" fill="#ff0000"/>
<rect x="1994" y="538" width="1" height="48" fill="#ff0000"/>
<rect x="1989" y="508" width="11" height="1" fill="#ff0000"/>
<rect x="1989" y="537" width="11" height="1" fill="#ff0000"/>
<rect x="1989" y="508" width="1" height="30" fill="#ff0000"/>
<rect x="1999" y="508" width="1" height="30" fill="#ff0000"/>
<rect x="2008" y="508" width="1" height="3" fill="#008000"/>
<rect x="2008" y="512" width="1" height="20" fill="#008000"/>
<rect x="2003" y="511" width="11" height="1" fill="#008000"/>
</g>
<polyline points="14.5,173.5 28.5,167.5 42.5,161.5 56.5,156.5 70.5,151.5 84.5,147.5 98.5,142.5 112.5,137.5 126.5,131.5 139.5,125.5 153.5,124.5 167.5,122.5 181.5,121.5 195.5,121.5 209.5,121.5 223.5,121.5 237.5,121.5 251.5,120.5 265.5,120.5 279.5,119.5 293.5,119.5 307.5,119.5 321.5,119.5 335.5,119.5 349.5,119.5 363.5,123.5 376.5,130.5 390.5,137.5 404.5,144.5 418.5,151.5 432.5,158.5 446.5,165.5 460.5,171.5 474.5,177.5 488.5,183.5 502.5,188.5 516.5,193.5 530.5,198.5 544.5,202.5 558.5,205.5 572.5,209.5 586.5,212.5 600.5,216.5 613.5,222.5 627.5,227.5 641.5,231.5 655.5,235.5 669.5,240.5 683.5,244.5 697.5,248.5 711.5,252.5 725.5,256.5 739.5,259.5 753.5,262.5 767.5,265.5 781.5,268.5 795.5,271.5 809.5,273.5 823.5,275.5 837.5,277.5 850.5,278.5 864.5,279.5 878.5,279.5 892.5,281.5 906.5,283.5 920.5,285.5 934.5,286.5 948.5,288.5 962.5,290.5 976.5,291.5 990.5,296.5 1004.5,301.5 1018.5,306.5 1032.5,311.5 1046.5,314.5 1060.5,318.5 1074.5,321.5 1087.5,325.5 1101.5,329.5 1115.5,332.5 1129.5,335.5 1143.5,337.5 1157.5,339.5 1171.5,341.5 1185.5,344.5 1199.5,346.5 1213.5,348.5 1227.5,351.5 1241.5,352.5 1255.5,353.5 1269.5,354.5 1283.5,356.5 1297.5,357.5 1311.5,359.5 1324.5,361.5 1338.5,363.5 1352.5,366.5 1366.5,367.5 1380.5,367.5 1394.5,367.5 1408.5,367.5 1422.5,367.5 1436.5,367.5 1450.5,366.5 1464.5,363.5 1478.5,362.5 1492.5,360.5 1506.5,358.5 1520.5,356.5 1534.5,352.5 1547.5,348.5 1561.5,345.5 1575.5,344.5 1589.5,344.5 1603.5,344.5 1617.5,346.5 1631.5,349.5 1645.5,352.5 1659.5,355.5 1673.5,357.5 1687.5,360.5 1701.5,362.5 1715.5,364.5 1729.5,366.5 1743.5,368.5 1757.5,369.5 1771.5,371.5 1784.5,372.5 1798.5,372.5 1812.5,374.5 1826.5,374.5 1840.5,374.5 1854.5,374.5 1868.5,373.5 1882.5,373.5 1896.5,373.5 1910.5,375.5 1924.5,377.5 1938.5,379.5 1952.5,382.5 1966.5,384.5 1980.5,386.5 1994.5,387.5 2008.5,387.5" fill="none" stroke="#e64a0a" stroke-width="1" shape-rendering="crispEdges"/>
<rect x="276" y="379" width="1863" height="3" fill="#2d50d2"/>
<polyline points="14.5,62.5 28.5,79.5 42.5,96.5 56.5,117.5 70.5,126.5 84.5,138.5 98.5,146.5 112.5,152.5 126.5,159.5 139.5,167.5 153.5,191.5 167.5,215.5 181.5,239.5 195.5,262.5 209.5,275.5 223.5,274.5 237.5,270.5 251.5,266.5 265.5,252.5 279.5,245.5 293.5,245.5 307.5,257.5 321.5,270.5 335.5,281.5 349.5,294.5 363.5,311.5 376.5,320.5 390.5,325.5 404.5,345.5 418.5,359.5 432.5,363.5 446.5,363.5 460.5,364.5 474.5,358.5 488.5,352.5 502.5,345.5 516.5,330.5 530.5,318.5 544.5,310.5 558.5,293.5 572.5,273.5 586.5,267.5 600.5,259.5 613.5,274.5 627.5,292.5 641.5,312.5 655.5,317.5 669.5,319.5 683.5,291.5 697.5,264.5 711.5,238.5 725.5,234.5 739.5,232.5 753.5,235.5 767.5,246.5 781.5,256.5 795.5,254.5 809.5,253.5 823.5,252.5 837.5,244.5 850.5,236.5 864.5,226.5 878.5,223.5 892.5,232.5 906.5,248.5 920.5,270.5 934.5,303.5 948.5,319.5 962.5,339.5 976.5,362.5 990.5,393.5 1004.5,423.5 1018.5,461.5 1032.5,478.5 1046.5,497.5 1060.5,493.5 1074.5,490.5 1087.5,488.5 1101.5,495.5 1115.5,493.5 1129.5,492.5 1143.5,484.5 1157.5,485.5 1171.5,484.5 1185.5,485.5 1199.5,491.5 1213.5,494.5 1227.5,482.5 1241.5,477.5 1255.5,455.5 1269.5,434.5 1283.5,413.5 1297.5,390.5 1311.5,362.5 1324.5,368.5 1338.5,378.5 1352.5,376.5 1366.5,388.5 1380.5,395.5 1394.5,373.5 1408.5,350.5 1422.5,338.5 1436.5,317.5 1450.5,263.5 1464.5,226.5 1478.5,186.5 1492.5,163.5 1506.5,133.5 1520.5,127.5 1534.5,117.5 1547.5,107.5 1561.5,88.5 1575.5,87.5 1589.5,115.5 1603.5,157.5 1617.5,199.5 1631.5,254.5 1645.5,314.5 1659.5,344.5 1673.5,381.5 1687.5,415.5 1701.5,446.5 1715.5,460.5 1729.5,482.5 1743.5,500.5 1757.5,517.5 1771.5,525.5 1784.5,534.5 1798.5,544.5 1812.5,553.5 1826.5,547.5 1840.5,535.5 1854.5,523.5 1868.5,509.5 1882.5,495.5 1896.5,482.5 1910.5,493.5 1924.5,518.5 1938.5,544.5 1952.5,578.5 1966.5,612.5 1980.5,610.5 1994.5,585.5 2008.5,569.5" fill="none" stroke="#000080" stroke-width="1" shape-rendering="crispEdges"/>
<text x="4" y="150" fill="#ff0000" font-size="14" textLength="44" lengthAdjust="spacing">102.89</text>
<text x="4" y="273" fill="#ff0000" font-size="14" textLength="96" lengthAdjust="spacing">38.2% 102.637</text>
<rect x="1561" y="52" width="18" height="1" fill="#000000"/>
<text x="1582" y="58" fill="#000000" font-size="14" textLength="52" lengthAdjust="spacing">103.055</text>
<rect x="1953" y="682" width="17" height="1" fill="#000000"/>
<text x="1973" y="679" fill="#000000" font-size="14" textLength="52" lengthAdjust="spacing">101.785</text>
<polygon points="1637,548 1887.5,686.4 1890,683.5 1900.7,697.5 1882,696.5 1884.5,691.6 1636.5,549.5" fill="#800080"/>
<polygon points="2002.5,555.5 2038.9,400.1 2035,398.6 2046.7,384.4 2051,401.9 2047.2,401 2004,555" fill="#800080"/>
<text x="2151" y="84" fill="#808080" font-size="14" textLength="52" lengthAdjust="spacing">103.000</text>
<text x="2151" y="134" fill="#808080" font-size="14" textLength="52" lengthAdjust="spacing">102.900</text>
<text x="2151" y="184" fill="#808080" font-size="14" textLength="52" lengthAdjust="spacing">102.800</text>
<text x="2151" y="233" fill="#808080" font-size="14" textLength="52" lengthAdjust="spacing">102.700</text>
<text x="2151" y="283" fill="#808080" font-size="14" textLength="52" lengthAdjust="spacing">102.600</text>
<text x="2151" y="332" fill="#808080" font-size="14" textLength="52" lengthAdjust="spacing">102.500</text>
<text x="2151" y="382" fill="#808080" font-size="14" textLength="52" lengthAdjust="spacing">102.400</text>
<text x="2151" y="432" fill="#808080" font-size="14" textLength="52" lengthAdjust="spacing">102.300</text>
<text x="2151" y="481" fill="#808080" font-size="14" textLength="52" lengthAdjust="spacing">102.200</text>
<text x="2151" y="531" fill="#808080" font-size="14" textLength="52" lengthAdjust="spacing">102.100</text>
<text x="2151" y="580" fill="#808080" font-size="14" textLength="52" lengthAdjust="spacing">102.000</text>
<text x="2151" y="630" fill="#808080" font-size="14" textLength="52" lengthAdjust="spacing">101.900</text>
<text x="2151" y="680" fill="#808080" font-size="14" textLength="52" lengthAdjust="spacing">101.800</text>
<polygon points="2148,511.5 2155,503 2201,503 2201,519 2154,519" fill="#eef6ee"/>
<text x="2149" y="516" fill="#ff0000" font-size="14" textLength="52" lengthAdjust="spacing">102.130</text>
<g>
<path d="M6 12h1v1h-1zM12 12h1v1h-1zM33 12h1v1h-1zM37 12h1v1h-1zM45 12h1v1h-1zM48 12h1v1h-1zM51 12h1v1h-1zM53 12h1v1h-1zM7 13h1v1h-1zM11 13h1v1h-1zM19 13h9v1h-9zM33 13h1v1h-1zM37 13h1v1h-1zM40 13h3v1h-3zM46 13h1v1h-1zM48 13h1v1h-1zM50 13h1v1h-1zM53 13h1v1h-1zM4 14h11v1h-11zM31 14h5v1h-5zM37 14h3v1h-3zM45 14h7v1h-7zM53 14h5v1h-5zM9 15h1v1h-1zM33 15h1v1h-1zM37 15h1v1h-1zM43 15h1v1h-1zM47 15h3v1h-3zM52 15h1v1h-1zM56 15h1v1h-1zM5 16h9v1h-9zM33 16h1v1h-1zM38 16h6v1h-6zM46 16h1v1h-1zM48 16h1v1h-1zM50 16h1v1h-1zM52 16h1v1h-1zM56 16h1v1h-1zM9 17h1v1h-1zM17 17h13v1h-13zM33 17h1v1h-1zM35 17h1v1h-1zM45 17h1v1h-1zM48 17h1v1h-1zM51 17h1v1h-1zM53 17h1v1h-1zM56 17h1v1h-1zM3 18h13v1h-13zM21 18h1v1h-1zM25 18h1v1h-1zM33 18h2v1h-2zM37 18h6v1h-6zM47 18h1v1h-1zM53 18h1v1h-1zM55 18h1v1h-1zM9 19h1v1h-1zM21 19h1v1h-1zM25 19h1v1h-1zM31 19h3v1h-3zM37 19h1v1h-1zM42 19h1v1h-1zM45 19h7v1h-7zM53 19h1v1h-1zM55 19h1v1h-1zM4 20h11v1h-11zM21 20h1v1h-1zM25 20h1v1h-1zM33 20h1v1h-1zM37 20h1v1h-1zM42 20h1v1h-1zM47 20h1v1h-1zM50 20h1v1h-1zM54 20h1v1h-1zM8 21h1v1h-1zM10 21h1v1h-1zM20 21h1v1h-1zM25 21h1v1h-1zM33 21h1v1h-1zM37 21h6v1h-6zM46 21h2v1h-2zM49 21h1v1h-1zM54 21h1v1h-1zM7 22h1v1h-1zM11 22h1v1h-1zM20 22h1v1h-1zM25 22h1v1h-1zM29 22h1v1h-1zM33 22h1v1h-1zM37 22h1v1h-1zM42 22h1v1h-1zM48 22h1v1h-1zM53 22h1v1h-1zM55 22h1v1h-1zM6 23h1v1h-1zM12 23h1v1h-1zM19 23h1v1h-1zM25 23h1v1h-1zM29 23h1v1h-1zM31 23h1v1h-1zM33 23h1v1h-1zM37 23h1v1h-1zM42 23h1v1h-1zM47 23h1v1h-1zM49 23h1v1h-1zM52 23h1v1h-1zM56 23h1v1h-1zM3 24h3v1h-3zM13 24h3v1h-3zM17 24h2v1h-2zM26 24h4v1h-4zM32 24h1v1h-1zM37 24h6v1h-6zM45 24h2v1h-2zM50 24h2v1h-2zM57 24h1v1h-1z" fill="#000000" shape-rendering="crispEdges"/>
<text x="63" y="23" fill="#000000" font-size="14" textLength="72" lengthAdjust="spacing">2023/04/04</text>
<path d="M143 13h9v1h-9zM145 14h1v1h-1zM149 14h1v1h-1zM145 15h1v1h-1zM149 15h1v1h-1zM145 16h1v1h-1zM149 16h1v1h-1zM145 17h1v1h-1zM149 17h1v1h-1zM141 18h13v1h-13zM145 19h1v1h-1zM149 19h1v1h-1zM145 20h1v1h-1zM149 20h1v1h-1zM144 21h1v1h-1zM149 21h1v1h-1zM144 22h1v1h-1zM149 22h1v1h-1zM143 23h1v1h-1zM149 23h1v1h-1zM142 24h1v1h-1zM149 24h1v1h-1z" fill="#008000" shape-rendering="crispEdges"/>
<text x="155" y="23" fill="#008000" font-size="14" textLength="52" lengthAdjust="spacing">102.130</text>
<path d="M222 12h1v1h-1zM216 13h13v1h-13zM219 15h7v1h-7zM219 16h1v1h-1zM225 16h1v1h-1zM219 17h7v1h-7zM217 19h11v1h-11zM217 20h1v1h-1zM227 20h1v1h-1zM217 21h1v1h-1zM219 21h7v1h-7zM227 21h1v1h-1zM217 22h1v1h-1zM219 22h1v1h-1zM225 22h1v1h-1zM227 22h1v1h-1zM217 23h1v1h-1zM219 23h7v1h-7zM227 23h1v1h-1zM217 24h1v1h-1zM226 24h2v1h-2z" fill="#000000" shape-rendering="crispEdges"/>
<text x="230" y="23" fill="#000000" font-size="14" textLength="52" lengthAdjust="spacing">102.135</text>
<path d="M294 12h1v1h-1zM300 12h3v1h-3zM294 13h1v1h-1zM296 13h4v1h-4zM293 14h1v1h-1zM296 14h1v1h-1zM299 14h1v1h-1zM293 15h1v1h-1zM296 15h1v1h-1zM299 15h1v1h-1zM292 16h2v1h-2zM296 16h1v1h-1zM299 16h1v1h-1zM291 17h1v1h-1zM293 17h1v1h-1zM296 17h8v1h-8zM293 18h1v1h-1zM296 18h1v1h-1zM299 18h1v1h-1zM293 19h1v1h-1zM296 19h1v1h-1zM299 19h1v1h-1zM293 20h1v1h-1zM296 20h1v1h-1zM300 20h1v1h-1zM293 21h1v1h-1zM296 21h1v1h-1zM300 21h1v1h-1zM303 21h1v1h-1zM293 22h1v1h-1zM296 22h1v1h-1zM298 22h1v1h-1zM301 22h1v1h-1zM303 22h1v1h-1zM293 23h1v1h-1zM296 23h2v1h-2zM299 23h1v1h-1zM302 23h2v1h-2zM293 24h1v1h-1zM296 24h1v1h-1zM300 24h1v1h-1zM303 24h1v1h-1z" fill="#008000" shape-rendering="crispEdges"/>
<text x="305" y="23" fill="#008000" font-size="14" textLength="52" lengthAdjust="spacing">102.085</text>
<path d="M369 12h1v1h-1zM372 12h1v1h-1zM369 13h1v1h-1zM372 13h1v1h-1zM366 14h1v1h-1zM369 14h1v1h-1zM372 14h1v1h-1zM366 15h1v1h-1zM369 15h1v1h-1zM372 15h7v1h-7zM366 16h1v1h-1zM369 16h1v1h-1zM371 16h1v1h-1zM376 16h1v1h-1zM366 17h1v1h-1zM369 17h2v1h-2zM372 17h1v1h-1zM376 17h1v1h-1zM366 18h1v1h-1zM369 18h1v1h-1zM372 18h1v1h-1zM376 18h1v1h-1zM366 19h1v1h-1zM368 19h2v1h-2zM373 19h1v1h-1zM375 19h1v1h-1zM366 20h2v1h-2zM369 20h1v1h-1zM373 20h1v1h-1zM375 20h1v1h-1zM369 21h1v1h-1zM374 21h1v1h-1zM369 22h1v1h-1zM373 22h1v1h-1zM375 22h1v1h-1zM369 23h1v1h-1zM372 23h1v1h-1zM376 23h1v1h-1zM369 24h3v1h-3zM377 24h2v1h-2z" fill="#008000" shape-rendering="crispEdges"/>
<text x="380" y="23" fill="#008000" font-size="14" textLength="52" lengthAdjust="spacing">102.130</text>
<path d="M443 12h9v1h-9zM443 13h1v1h-1zM451 13h1v1h-1zM443 14h9v1h-9zM443 15h1v1h-1zM451 15h1v1h-1zM441 16h13v1h-13zM443 17h1v1h-1zM447 17h1v1h-1zM451 17h1v1h-1zM443 18h9v1h-9zM443 19h1v1h-1zM447 19h1v1h-1zM451 19h1v1h-1zM443 20h9v1h-9zM447 21h1v1h-1zM443 22h9v1h-9zM447 23h1v1h-1zM441 24h13v1h-13z" fill="#000000" shape-rendering="crispEdges"/>
<text x="455" y="23" fill="#000000" font-size="14">0</text>
<path d="M472 12h1v1h-1zM469 13h13v1h-13zM469 14h1v1h-1zM471 14h1v1h-1zM474 14h1v1h-1zM477 14h1v1h-1zM471 15h3v1h-3zM476 15h5v1h-5zM470 16h2v1h-2zM473 16h1v1h-1zM476 16h1v1h-1zM480 16h1v1h-1zM469 17h1v1h-1zM472 17h1v1h-1zM476 17h1v1h-1zM478 17h1v1h-1zM480 17h1v1h-1zM471 18h2v1h-2zM476 18h1v1h-1zM478 18h1v1h-1zM480 18h1v1h-1zM470 19h1v1h-1zM473 19h1v1h-1zM476 19h1v1h-1zM478 19h1v1h-1zM480 19h1v1h-1zM469 20h6v1h-6zM476 20h1v1h-1zM478 20h1v1h-1zM480 20h1v1h-1zM470 21h1v1h-1zM473 21h1v1h-1zM476 21h1v1h-1zM478 21h1v1h-1zM480 21h1v1h-1zM470 22h1v1h-1zM473 22h1v1h-1zM477 22h1v1h-1zM479 22h1v1h-1zM470 23h4v1h-4zM476 23h1v1h-1zM480 23h1v1h-1zM470 24h1v1h-1zM473 24h1v1h-1zM475 24h1v1h-1zM481 24h1v1h-1z" fill="#000000" shape-rendering="crispEdges"/>
<text x="483" y="23" fill="#000000" font-size="14">0</text>
<path d="M499 12h1v1h-1zM503 12h1v1h-1zM499 13h1v1h-1zM503 13h5v1h-5zM497 14h4v1h-4zM502 14h1v1h-1zM506 14h1v1h-1zM499 15h1v1h-1zM501 15h8v1h-8zM499 16h1v1h-1zM502 16h1v1h-1zM505 16h1v1h-1zM508 16h1v1h-1zM499 17h1v1h-1zM502 17h1v1h-1zM505 17h1v1h-1zM508 17h1v1h-1zM499 18h2v1h-2zM502 18h1v1h-1zM505 18h1v1h-1zM508 18h1v1h-1zM497 19h3v1h-3zM501 19h9v1h-9zM499 20h1v1h-1zM505 20h1v1h-1zM499 21h1v1h-1zM504 21h1v1h-1zM506 21h1v1h-1zM499 22h1v1h-1zM503 22h1v1h-1zM507 22h1v1h-1zM497 23h1v1h-1zM499 23h1v1h-1zM502 23h1v1h-1zM508 23h1v1h-1zM498 24h1v1h-1zM501 24h1v1h-1zM509 24h1v1h-1z" fill="#000000" shape-rendering="crispEdges"/>
<text x="511" y="23" fill="#000000" font-size="14" textLength="40" lengthAdjust="spacing">0.00%</text>
<path d="M557 12h1v1h-1zM557 13h1v1h-1zM560 13h8v1h-8zM555 14h6v1h-6zM557 15h1v1h-1zM560 15h1v1h-1zM562 15h5v1h-5zM557 16h1v1h-1zM560 16h1v1h-1zM557 17h1v1h-1zM559 17h9v1h-9zM557 18h2v1h-2zM560 18h1v1h-1zM562 18h1v1h-1zM565 18h1v1h-1zM555 19h3v1h-3zM560 19h1v1h-1zM562 19h1v1h-1zM565 19h1v1h-1zM567 19h1v1h-1zM557 20h1v1h-1zM560 20h1v1h-1zM562 20h1v1h-1zM565 20h2v1h-2zM557 21h1v1h-1zM560 21h1v1h-1zM562 21h1v1h-1zM565 21h1v1h-1zM557 22h1v1h-1zM559 22h1v1h-1zM562 22h1v1h-1zM564 22h1v1h-1zM566 22h1v1h-1zM555 23h1v1h-1zM557 23h1v1h-1zM559 23h1v1h-1zM562 23h2v1h-2zM566 23h1v1h-1zM556 24h1v1h-1zM558 24h1v1h-1zM562 24h1v1h-1zM567 24h1v1h-1z" fill="#000000" shape-rendering="crispEdges"/>
<text x="569" y="23" fill="#000000" font-size="14" textLength="40" lengthAdjust="spacing">0.05%</text>
<path d="M616 12h1v1h-1zM623 12h1v1h-1zM617 13h1v1h-1zM619 13h3v1h-3zM623 13h1v1h-1zM626 13h1v1h-1zM621 14h1v1h-1zM623 14h1v1h-1zM625 14h1v1h-1zM615 15h1v1h-1zM621 15h1v1h-1zM623 15h2v1h-2zM616 16h1v1h-1zM619 16h3v1h-3zM623 16h1v1h-1zM619 17h1v1h-1zM622 17h6v1h-6zM617 18h1v1h-1zM619 18h3v1h-3zM623 18h1v1h-1zM617 19h1v1h-1zM621 19h1v1h-1zM623 19h2v1h-2zM615 20h2v1h-2zM621 20h1v1h-1zM623 20h1v1h-1zM625 20h1v1h-1zM616 21h1v1h-1zM621 21h1v1h-1zM623 21h1v1h-1zM626 21h1v1h-1zM616 22h1v1h-1zM621 22h1v1h-1zM623 22h1v1h-1zM627 22h1v1h-1zM616 23h1v1h-1zM619 23h1v1h-1zM621 23h1v1h-1zM623 23h2v1h-2zM616 24h1v1h-1zM620 24h1v1h-1zM623 24h1v1h-1z" fill="#008000" shape-rendering="crispEdges"/>
<text x="629" y="23" fill="#008000" font-size="14" textLength="96" lengthAdjust="spacing">(-0.005)-0.00%</text>
<text x="3" y="41" fill="#000000" font-size="14" textLength="215" lengthAdjust="spacing">MA(5,55,20,30,60,120,240,360,2)</text>
<text x="228" y="41" fill="#2020a0" font-size="14" textLength="20" lengthAdjust="spacing">M1</text>
<text x="252" y="41" fill="#0000c0" font-size="14" textLength="52" lengthAdjust="spacing">102.014</text>
<text x="317" y="41" fill="#e64a0a" font-size="14" textLength="20" lengthAdjust="spacing">M2</text>
<text x="341" y="41" fill="#e64a0a" font-size="14" textLength="52" lengthAdjust="spacing">102.379</text>
<g shape-rendering="crispEdges">
<rect x="210" y="14" width="1" height="12" fill="#008000"/>
<rect x="209" y="15" width="1" height="1" fill="#008000"/>
<rect x="211" y="15" width="1" height="1" fill="#008000"/>
<rect x="208" y="16" width="1" height="1" fill="#008000"/>
<rect x="212" y="16" width="1" height="1" fill="#008000"/>
<rect x="285" y="14" width="1" height="12" fill="#000000"/>
<rect x="284" y="24" width="1" height="1" fill="#000000"/>
<rect x="286" y="24" width="1" height="1" fill="#000000"/>
<rect x="283" y="23" width="1" height="1" fill="#000000"/>
<rect x="287" y="23" width="1" height="1" fill="#000000"/>
<rect x="360" y="14" width="1" height="12" fill="#008000"/>
<rect x="359" y="15" width="1" height="1" fill="#008000"/>
<rect x="361" y="15" width="1" height="1" fill="#008000"/>
<rect x="358" y="16" width="1" height="1" fill="#008000"/>
<rect x="362" y="16" width="1" height="1" fill="#008000"/>
<rect x="435" y="14" width="1" height="12" fill="#008000"/>
<rect x="434" y="24" width="1" height="1" fill="#008000"/>
<rect x="436" y="24" width="1" height="1" fill="#008000"/>
<rect x="433" y="23" width="1" height="1" fill="#008000"/>
<rect x="437" y="23" width="1" height="1" fill="#008000"/>
<rect x="727" y="14" width="1" height="12" fill="#008000"/>
<rect x="726" y="24" width="1" height="1" fill="#008000"/>
<rect x="728" y="24" width="1" height="1" fill="#008000"/>
<rect x="725" y="23" width="1" height="1" fill="#008000"/>
<rect x="729" y="23" width="1" height="1" fill="#008000"/>
<rect x="306" y="32" width="1" height="12" fill="#0000c0"/>
<rect x="305" y="33" width="1" height="1" fill="#0000c0"/>
<rect x="307" y="33" width="1" height="1" fill="#0000c0"/>
<rect x="304" y="34" width="1" height="1" fill="#0000c0"/>
<rect x="308" y="34" width="1" height="1" fill="#0000c0"/>
<rect x="395" y="32" width="1" height="12" fill="#e64a0a"/>
<rect x="394" y="42" width="1" height="1" fill="#e64a0a"/>
<rect x="396" y="42" width="1" height="1" fill="#e64a0a"/>
<rect x="393" y="41" width="1" height="1" fill="#e64a0a"/>
<rect x="397" y="41" width="1" height="1" fill="#e64a0a"/>
</g>
</g>
<rect x="2185.5" y="10.5" width="15" height="11" fill="none" stroke="#e05010" stroke-width="1" shape-rendering="crispEdges"/>
<rect x="2196" y="10" width="1" height="12" fill="#e05010"/>
<rect x="2203" y="32" width="11" height="1" fill="#808080"/>
<rect x="2206" y="64" width="8" height="1" fill="#808080"/>
<rect x="2206" y="85" width="8" height="1" fill="#303030"/>
<rect x="2207" y="111" width="7" height="21" fill="#00ffff"/>
<rect x="2207" y="85" width="7" height="1" fill="#000000"/>
<polyline points="2205,59 2208,59 2211,55 2214,55" fill="none" stroke="#909090" stroke-width="1"/>
<text x="2212" y="104" fill="#803000" font-size="14">U</text>
<text x="2211" y="214" fill="#102040" font-size="14">C</text>
<text x="2211" y="259" fill="#102040" font-size="14">E</text>
<text x="2210" y="285" fill="#102040" font-size="14">A</text>
<text x="2211" y="325" fill="#102040" font-size="14">E</text>
<text x="2211" y="456" fill="#102040" font-size="14">U</text>
<text x="2211" y="478" fill="#102040" font-size="14">U</text>
<rect x="2" y="694" width="2145" height="1" fill="#808080"/>
<rect x="2" y="713" width="2145" height="1" fill="#808080"/>
<rect x="2146" y="694" width="58" height="1" fill="#808080"/>
<rect x="2146" y="713" width="58" height="1" fill="#808080"/>
<rect x="14" y="694" width="1" height="19" fill="#808080"/>
<rect x="42" y="694" width="1" height="4" fill="#808080"/>
<rect x="376" y="694" width="1" height="5" fill="#808080"/>
<text x="378" y="708" fill="#808080" font-size="14" textLength="36" lengthAdjust="spacing">03/29</text>
<rect x="711" y="694" width="1" height="5" fill="#808080"/>
<text x="713" y="708" fill="#808080" font-size="14" textLength="36" lengthAdjust="spacing">03/30</text>
<rect x="1046" y="694" width="1" height="5" fill="#808080"/>
<text x="1048" y="708" fill="#808080" font-size="14" textLength="36" lengthAdjust="spacing">03/31</text>
<rect x="1380" y="694" width="1" height="5" fill="#808080"/>
<text x="1382" y="708" fill="#808080" font-size="14" textLength="36" lengthAdjust="spacing">04/01</text>
<rect x="1450" y="694" width="1" height="5" fill="#808080"/>
<text x="1452" y="708" fill="#808080" font-size="14" textLength="36" lengthAdjust="spacing">04/03</text>
<rect x="1715" y="694" width="1" height="5" fill="#808080"/>
<text x="1717" y="708" fill="#808080" font-size="14" textLength="36" lengthAdjust="spacing">04/04</text>
<rect x="2049" y="694" width="1" height="5" fill="#808080"/>
<text x="2051" y="708" fill="#808080" font-size="14" textLength="36" lengthAdjust="spacing">04/05</text>
<text x="16" y="708" fill="#808080" font-size="14" textLength="72" lengthAdjust="spacing">2023/03/27</text>
<rect x="2100" y="695" width="46" height="18" rx="3" fill="#c5dbf3"/>
<text x="2152" y="709" fill="#e64a0a" font-size="14" textLength="16" lengthAdjust="spacing">60</text>
<path d="M2175 697h1v1h-1zM2183 697h1v1h-1zM2191 697h1v1h-1zM2172 698h1v1h-1zM2175 698h1v1h-1zM2183 698h1v1h-1zM2191 698h1v1h-1zM2172 699h1v1h-1zM2176 699h1v1h-1zM2183 699h4v1h-4zM2191 699h1v1h-1zM2171 700h1v1h-1zM2176 700h1v1h-1zM2182 700h1v1h-1zM2188 700h7v1h-7zM2171 701h1v1h-1zM2177 701h1v1h-1zM2182 701h5v1h-5zM2188 701h1v1h-1zM2191 701h1v1h-1zM2194 701h1v1h-1zM2170 702h1v1h-1zM2178 702h1v1h-1zM2184 702h1v1h-1zM2188 702h1v1h-1zM2191 702h1v1h-1zM2194 702h1v1h-1zM2169 703h1v1h-1zM2171 703h7v1h-7zM2179 703h1v1h-1zM2184 703h1v1h-1zM2188 703h1v1h-1zM2191 703h1v1h-1zM2194 703h1v1h-1zM2168 704h1v1h-1zM2173 704h1v1h-1zM2177 704h1v1h-1zM2180 704h1v1h-1zM2182 704h5v1h-5zM2188 704h7v1h-7zM2173 705h1v1h-1zM2177 705h1v1h-1zM2184 705h1v1h-1zM2191 705h1v1h-1zM2172 706h1v1h-1zM2177 706h1v1h-1zM2184 706h1v1h-1zM2191 706h1v1h-1zM2172 707h1v1h-1zM2177 707h1v1h-1zM2184 707h1v1h-1zM2186 707h1v1h-1zM2191 707h1v1h-1zM2171 708h1v1h-1zM2175 708h1v1h-1zM2177 708h1v1h-1zM2184 708h2v1h-2zM2191 708h1v1h-1zM2169 709h2v1h-2zM2176 709h1v1h-1zM2184 709h1v1h-1zM2191 709h1v1h-1z" fill="#e64a0a" shape-rendering="crispEdges"/>
<text x="3" y="729" fill="#000000" font-size="14" textLength="99" lengthAdjust="spacing">MACD(12,26,9)</text>
<text x="112" y="729" fill="#000080" font-size="14" textLength="68" lengthAdjust="spacing">DIF -8.494</text>
<text x="193" y="729" fill="#e64a0a" font-size="14" textLength="81" lengthAdjust="spacing">DEA -10.712</text>
<text x="288" y="729" fill="#808080" font-size="14" textLength="81" lengthAdjust="spacing">MACD 4.437</text>
<text x="382" y="729" fill="#800000" font-size="14" textLength="21" lengthAdjust="spacing">B 0</text>
<text x="410" y="729" fill="#008000" font-size="14" textLength="32" lengthAdjust="spacing">BG 0</text>
<text x="450" y="729" fill="#00e0e0" font-size="14" textLength="21" lengthAdjust="spacing">T 0</text>
<text x="478" y="729" fill="#ff00ff" font-size="14" textLength="32" lengthAdjust="spacing">TG 0</text>
<g shape-rendering="crispEdges">
<rect x="182" y="720" width="1" height="12" fill="#000080"/>
<rect x="181" y="721" width="1" height="1" fill="#000080"/>
<rect x="183" y="721" width="1" height="1" fill="#000080"/>
<rect x="180" y="722" width="1" height="1" fill="#000080"/>
<rect x="184" y="722" width="1" height="1" fill="#000080"/>
<rect x="277" y="720" width="1" height="12" fill="#e64a0a"/>
<rect x="276" y="721" width="1" height="1" fill="#e64a0a"/>
<rect x="278" y="721" width="1" height="1" fill="#e64a0a"/>
<rect x="275" y="722" width="1" height="1" fill="#e64a0a"/>
<rect x="279" y="722" width="1" height="1" fill="#e64a0a"/>
<rect x="371" y="720" width="1" height="12" fill="#808080"/>
<rect x="370" y="721" width="1" height="1" fill="#808080"/>
<rect x="372" y="721" width="1" height="1" fill="#808080"/>
<rect x="369" y="722" width="1" height="1" fill="#808080"/>
<rect x="373" y="722" width="1" height="1" fill="#808080"/>
<rect x="143" y="1112" width="1" height="12" fill="#000080"/>
<rect x="142" y="1113" width="1" height="1" fill="#000080"/>
<rect x="144" y="1113" width="1" height="1" fill="#000080"/>
<rect x="141" y="1114" width="1" height="1" fill="#000080"/>
<rect x="145" y="1114" width="1" height="1" fill="#000080"/>
<rect x="213" y="1112" width="1" height="12" fill="#e64a0a"/>
<rect x="212" y="1113" width="1" height="1" fill="#e64a0a"/>
<rect x="214" y="1113" width="1" height="1" fill="#e64a0a"/>
<rect x="211" y="1114" width="1" height="1" fill="#e64a0a"/>
<rect x="215" y="1114" width="1" height="1" fill="#e64a0a"/>
<rect x="281" y="1112" width="1" height="12" fill="#808080"/>
<rect x="280" y="1113" width="1" height="1" fill="#808080"/>
<rect x="282" y="1113" width="1" height="1" fill="#808080"/>
<rect x="279" y="1114" width="1" height="1" fill="#808080"/>
<rect x="283" y="1114" width="1" height="1" fill="#808080"/>
</g>
<g stroke="#808080" stroke-width="1" stroke-dasharray="1 1" shape-rendering="crispEdges">
<line x1="3" y1="764.5" x2="2146" y2="764.5"/>
<line x1="3" y1="808.5" x2="2146" y2="808.5"/>
<line x1="3" y1="851.5" x2="2146" y2="851.5"/>
<line x1="3" y1="895.5" x2="2146" y2="895.5"/>
<line x1="3" y1="939.5" x2="2146" y2="939.5"/>
<line x1="3" y1="983.5" x2="2146" y2="983.5"/>
<line x1="3" y1="1027.5" x2="2146" y2="1027.5"/>
<line x1="3" y1="1070.5" x2="2146" y2="1070.5"/>
</g>
<rect x="2146" y="764" width="4" height="1" fill="#808080"/>
<text x="2176" y="769" fill="#808080" font-size="14" text-anchor="middle" textLength="36" lengthAdjust="spacing">15.00</text>
<rect x="2146" y="808" width="4" height="1" fill="#808080"/>
<text x="2176" y="813" fill="#808080" font-size="14" text-anchor="middle" textLength="36" lengthAdjust="spacing">10.00</text>
<rect x="2146" y="851" width="4" height="1" fill="#808080"/>
<text x="2176" y="856" fill="#808080" font-size="14" text-anchor="middle" textLength="28" lengthAdjust="spacing">5.00</text>
<rect x="2146" y="895" width="4" height="1" fill="#808080"/>
<text x="2176" y="900" fill="#808080" font-size="14" text-anchor="middle">0</text>
<rect x="2146" y="939" width="4" height="1" fill="#808080"/>
<text x="2176" y="944" fill="#808080" font-size="14" text-anchor="middle" textLength="33" lengthAdjust="spacing">-5.00</text>
<rect x="2146" y="983" width="4" height="1" fill="#808080"/>
<text x="2176" y="988" fill="#808080" font-size="14" text-anchor="middle" textLength="41" lengthAdjust="spacing">-10.00</text>
<rect x="2146" y="1027" width="4" height="1" fill="#808080"/>
<text x="2176" y="1032" fill="#808080" font-size="14" text-anchor="middle" textLength="41" lengthAdjust="spacing">-15.00</text>
<rect x="2146" y="1070" width="4" height="1" fill="#808080"/>
<text x="2176" y="1075" fill="#808080" font-size="14" text-anchor="middle" textLength="41" lengthAdjust="spacing">-20.00</text>
<text x="2176" y="1103" fill="#808080" font-size="14" text-anchor="middle" textLength="41" lengthAdjust="spacing">-25.00</text>
<g shape-rendering="crispEdges">
<rect x="14" y="895" width="1" height="48" fill="#008000"/>
<rect x="28" y="895" width="1" height="58" fill="#008000"/>
<rect x="42" y="895" width="1" height="61" fill="#008000"/>
<rect x="56" y="895" width="1" height="64" fill="#008000"/>
<rect x="70" y="895" width="1" height="65" fill="#008000"/>
<rect x="84" y="895" width="1" height="64" fill="#008000"/>
<rect x="98" y="895" width="1" height="61" fill="#008000"/>
<rect x="112" y="895" width="1" height="56" fill="#008000"/>
<rect x="126" y="895" width="1" height="50" fill="#008000"/>
<rect x="139" y="895" width="1" height="55" fill="#008000"/>
<rect x="153" y="895" width="1" height="69" fill="#008000"/>
<rect x="167" y="895" width="1" height="73" fill="#008000"/>
<rect x="181" y="895" width="1" height="73" fill="#008000"/>
<rect x="195" y="895" width="1" height="70" fill="#008000"/>
<rect x="209" y="895" width="1" height="61" fill="#008000"/>
<rect x="223" y="895" width="1" height="50" fill="#008000"/>
<rect x="237" y="895" width="1" height="35" fill="#008000"/>
<rect x="251" y="895" width="1" height="25" fill="#008000"/>
<rect x="265" y="895" width="1" height="7" fill="#008000"/>
<rect x="279" y="893" width="1" height="3" fill="#ff0000"/>
<rect x="293" y="893" width="1" height="3" fill="#ff0000"/>
<rect x="307" y="895" width="1" height="6" fill="#008000"/>
<rect x="321" y="895" width="1" height="15" fill="#008000"/>
<rect x="335" y="895" width="1" height="4" fill="#008000"/>
<rect x="349" y="895" width="1" height="5" fill="#008000"/>
<rect x="363" y="895" width="1" height="13" fill="#008000"/>
<rect x="376" y="895" width="1" height="17" fill="#008000"/>
<rect x="390" y="895" width="1" height="18" fill="#008000"/>
<rect x="404" y="895" width="1" height="17" fill="#008000"/>
<rect x="418" y="895" width="1" height="19" fill="#008000"/>
<rect x="432" y="895" width="1" height="15" fill="#008000"/>
<rect x="446" y="895" width="1" height="7" fill="#008000"/>
<rect x="474" y="885" width="1" height="11" fill="#ff0000"/>
<rect x="488" y="881" width="1" height="15" fill="#ff0000"/>
<rect x="502" y="872" width="1" height="24" fill="#ff0000"/>
<rect x="516" y="859" width="1" height="37" fill="#ff0000"/>
<rect x="530" y="851" width="1" height="45" fill="#ff0000"/>
<rect x="544" y="848" width="1" height="48" fill="#ff0000"/>
<rect x="558" y="838" width="1" height="58" fill="#ff0000"/>
<rect x="572" y="828" width="1" height="68" fill="#ff0000"/>
<rect x="586" y="833" width="1" height="63" fill="#ff0000"/>
<rect x="600" y="835" width="1" height="61" fill="#ff0000"/>
<rect x="613" y="868" width="1" height="28" fill="#ff0000"/>
<rect x="627" y="882" width="1" height="14" fill="#ff0000"/>
<rect x="641" y="886" width="1" height="10" fill="#ff0000"/>
<rect x="655" y="880" width="1" height="16" fill="#ff0000"/>
<rect x="669" y="875" width="1" height="21" fill="#ff0000"/>
<rect x="683" y="859" width="1" height="37" fill="#ff0000"/>
<rect x="697" y="847" width="1" height="49" fill="#ff0000"/>
<rect x="711" y="842" width="1" height="54" fill="#ff0000"/>
<rect x="725" y="858" width="1" height="38" fill="#ff0000"/>
<rect x="739" y="867" width="1" height="29" fill="#ff0000"/>
<rect x="753" y="869" width="1" height="27" fill="#ff0000"/>
<rect x="767" y="875" width="1" height="21" fill="#ff0000"/>
<rect x="781" y="880" width="1" height="16" fill="#ff0000"/>
<rect x="795" y="887" width="1" height="9" fill="#ff0000"/>
<rect x="809" y="891" width="1" height="5" fill="#ff0000"/>
<rect x="823" y="889" width="1" height="7" fill="#ff0000"/>
<rect x="837" y="883" width="1" height="13" fill="#ff0000"/>
<rect x="850" y="878" width="1" height="18" fill="#ff0000"/>
<rect x="864" y="879" width="1" height="17" fill="#ff0000"/>
<rect x="878" y="888" width="1" height="8" fill="#ff0000"/>
<rect x="892" y="895" width="1" height="5" fill="#008000"/>
<rect x="906" y="895" width="1" height="17" fill="#008000"/>
<rect x="920" y="895" width="1" height="31" fill="#008000"/>
<rect x="934" y="895" width="1" height="52" fill="#008000"/>
<rect x="948" y="895" width="1" height="49" fill="#008000"/>
<rect x="962" y="895" width="1" height="58" fill="#008000"/>
<rect x="976" y="895" width="1" height="62" fill="#008000"/>
<rect x="990" y="895" width="1" height="85" fill="#008000"/>
<rect x="1004" y="895" width="1" height="102" fill="#008000"/>
<rect x="1018" y="895" width="1" height="102" fill="#008000"/>
<rect x="1032" y="895" width="1" height="83" fill="#008000"/>
<rect x="1046" y="895" width="1" height="78" fill="#008000"/>
<rect x="1060" y="895" width="1" height="64" fill="#008000"/>
<rect x="1074" y="895" width="1" height="57" fill="#008000"/>
<rect x="1087" y="895" width="1" height="45" fill="#008000"/>
<rect x="1101" y="895" width="1" height="33" fill="#008000"/>
<rect x="1115" y="895" width="1" height="23" fill="#008000"/>
<rect x="1129" y="895" width="1" height="9" fill="#008000"/>
<rect x="1143" y="891" width="1" height="5" fill="#ff0000"/>
<rect x="1157" y="889" width="1" height="7" fill="#ff0000"/>
<rect x="1171" y="885" width="1" height="11" fill="#ff0000"/>
<rect x="1185" y="882" width="1" height="14" fill="#ff0000"/>
<rect x="1199" y="881" width="1" height="15" fill="#ff0000"/>
<rect x="1213" y="875" width="1" height="21" fill="#ff0000"/>
<rect x="1227" y="861" width="1" height="35" fill="#ff0000"/>
<rect x="1241" y="859" width="1" height="37" fill="#ff0000"/>
<rect x="1255" y="840" width="1" height="56" fill="#ff0000"/>
<rect x="1269" y="829" width="1" height="67" fill="#ff0000"/>
<rect x="1283" y="823" width="1" height="73" fill="#ff0000"/>
<rect x="1297" y="811" width="1" height="85" fill="#ff0000"/>
<rect x="1311" y="809" width="1" height="87" fill="#ff0000"/>
<rect x="1324" y="829" width="1" height="67" fill="#ff0000"/>
<rect x="1338" y="851" width="1" height="45" fill="#ff0000"/>
<rect x="1352" y="848" width="1" height="48" fill="#ff0000"/>
<rect x="1366" y="856" width="1" height="40" fill="#ff0000"/>
<rect x="1380" y="859" width="1" height="37" fill="#ff0000"/>
<rect x="1394" y="847" width="1" height="49" fill="#ff0000"/>
<rect x="1408" y="847" width="1" height="49" fill="#ff0000"/>
<rect x="1422" y="844" width="1" height="52" fill="#ff0000"/>
<rect x="1436" y="842" width="1" height="54" fill="#ff0000"/>
<rect x="1450" y="806" width="1" height="90" fill="#ff0000"/>
<rect x="1464" y="788" width="1" height="108" fill="#ff0000"/>
<rect x="1478" y="784" width="1" height="112" fill="#ff0000"/>
<rect x="1492" y="802" width="1" height="94" fill="#ff0000"/>
<rect x="1506" y="814" width="1" height="82" fill="#ff0000"/>
<rect x="1520" y="813" width="1" height="83" fill="#ff0000"/>
<rect x="1534" y="813" width="1" height="83" fill="#ff0000"/>
<rect x="1547" y="821" width="1" height="75" fill="#ff0000"/>
<rect x="1561" y="832" width="1" height="64" fill="#ff0000"/>
<rect x="1575" y="860" width="1" height="36" fill="#ff0000"/>
<rect x="1589" y="895" width="1" height="8" fill="#008000"/>
<rect x="1603" y="895" width="1" height="41" fill="#008000"/>
<rect x="1617" y="895" width="1" height="72" fill="#008000"/>
<rect x="1631" y="895" width="1" height="106" fill="#008000"/>
<rect x="1645" y="895" width="1" height="135" fill="#008000"/>
<rect x="1659" y="895" width="1" height="137" fill="#008000"/>
<rect x="1673" y="895" width="1" height="150" fill="#008000"/>
<rect x="1687" y="895" width="1" height="158" fill="#008000"/>
<rect x="1701" y="895" width="1" height="159" fill="#008000"/>
<rect x="1715" y="895" width="1" height="151" fill="#008000"/>
<rect x="1729" y="895" width="1" height="136" fill="#008000"/>
<rect x="1743" y="895" width="1" height="128" fill="#008000"/>
<rect x="1757" y="895" width="1" height="123" fill="#008000"/>
<rect x="1771" y="895" width="1" height="111" fill="#008000"/>
<rect x="1784" y="895" width="1" height="94" fill="#008000"/>
<rect x="1798" y="895" width="1" height="77" fill="#008000"/>
<rect x="1812" y="895" width="1" height="66" fill="#008000"/>
<rect x="1826" y="895" width="1" height="46" fill="#008000"/>
<rect x="1840" y="895" width="1" height="18" fill="#008000"/>
<rect x="1854" y="893" width="1" height="3" fill="#ff0000"/>
<rect x="1868" y="877" width="1" height="19" fill="#ff0000"/>
<rect x="1882" y="871" width="1" height="25" fill="#ff0000"/>
<rect x="1896" y="857" width="1" height="39" fill="#ff0000"/>
<rect x="1910" y="869" width="1" height="27" fill="#ff0000"/>
<rect x="1938" y="895" width="1" height="7" fill="#008000"/>
<rect x="1952" y="895" width="1" height="24" fill="#008000"/>
<rect x="1966" y="895" width="1" height="22" fill="#008000"/>
<rect x="1980" y="894" width="1" height="2" fill="#ff0000"/>
<rect x="1994" y="871" width="1" height="25" fill="#ff0000"/>
<rect x="2008" y="857" width="1" height="39" fill="#ff0000"/>
</g>
<g shape-rendering="crispEdges">
<rect x="321" y="969" width="1" height="9" fill="#ff0000"/>
<rect x="335" y="970" width="1" height="3" fill="#ff0000"/>
<rect x="349" y="972" width="1" height="3" fill="#ff0000"/>
<rect x="363" y="974" width="1" height="5" fill="#ff0000"/>
<rect x="376" y="975" width="1" height="8" fill="#ff0000"/>
<rect x="1952" y="995" width="1" height="11" fill="#ff0000"/>
<rect x="1966" y="997" width="1" height="12" fill="#ff0000"/>
<rect x="962" y="895" width="1" height="34" fill="#ff0000"/>
<rect x="976" y="895" width="1" height="44" fill="#ff0000"/>
<rect x="990" y="895" width="1" height="66" fill="#ff0000"/>
<rect x="1004" y="895" width="1" height="88" fill="#ff0000"/>
</g>
<polyline points="14.5,845.5 28.5,853.5 42.5,861.5 56.5,869.5 70.5,877.5 84.5,885.5 98.5,891.5 112.5,898.5 126.5,905.5 139.5,912.5 153.5,921.5 167.5,930.5 181.5,938.5 195.5,947.5 209.5,954.5 223.5,960.5 237.5,964.5 251.5,968.5 265.5,968.5 279.5,968.5 293.5,968.5 307.5,969.5 321.5,969.5 335.5,970.5 349.5,972.5 363.5,974.5 376.5,975.5 390.5,977.5 404.5,980.5 418.5,982.5 432.5,983.5 446.5,984.5 460.5,984.5 474.5,982.5 488.5,979.5 502.5,977.5 516.5,972.5 530.5,966.5 544.5,960.5 558.5,953.5 572.5,945.5 586.5,937.5 600.5,929.5 613.5,926.5 627.5,924.5 641.5,922.5 655.5,920.5 669.5,917.5 683.5,914.5 697.5,907.5 711.5,900.5 725.5,895.5 739.5,892.5 753.5,888.5 767.5,886.5 781.5,883.5 795.5,883.5 809.5,882.5 823.5,880.5 837.5,879.5 850.5,877.5 864.5,875.5 878.5,874.5 892.5,874.5 906.5,877.5 920.5,881.5 934.5,887.5 948.5,893.5 962.5,899.5 976.5,908.5 990.5,918.5 1004.5,930.5 1018.5,942.5 1032.5,953.5 1046.5,963.5 1060.5,971.5 1074.5,977.5 1087.5,983.5 1101.5,987.5 1115.5,990.5 1129.5,991.5 1143.5,990.5 1157.5,990.5 1171.5,989.5 1185.5,988.5 1199.5,985.5 1213.5,982.5 1227.5,977.5 1241.5,972.5 1255.5,966.5 1269.5,958.5 1283.5,948.5 1297.5,938.5 1311.5,926.5 1324.5,919.5 1338.5,913.5 1352.5,907.5 1366.5,902.5 1380.5,898.5 1394.5,892.5 1408.5,886.5 1422.5,879.5 1436.5,872.5 1450.5,862.5 1464.5,847.5 1478.5,833.5 1492.5,818.5 1506.5,809.5 1520.5,799.5 1534.5,788.5 1547.5,779.5 1561.5,773.5 1575.5,769.5 1589.5,770.5 1603.5,774.5 1617.5,782.5 1631.5,797.5 1645.5,811.5 1659.5,828.5 1673.5,848.5 1687.5,868.5 1701.5,889.5 1715.5,906.5 1729.5,923.5 1743.5,939.5 1757.5,954.5 1771.5,968.5 1784.5,979.5 1798.5,988.5 1812.5,997.5 1826.5,1003.5 1840.5,1006.5 1854.5,1005.5 1868.5,1003.5 1882.5,999.5 1896.5,996.5 1910.5,992.5 1924.5,992.5 1938.5,992.5 1952.5,995.5 1966.5,997.5 1980.5,997.5 1994.5,994.5 2008.5,989.5" fill="none" stroke="#e64a0a" stroke-width="1" shape-rendering="crispEdges"/>
<polyline points="14.5,870.5 28.5,881.5 42.5,890.5 56.5,899.5 70.5,908.5 84.5,915.5 98.5,922.5 112.5,926.5 126.5,930.5 139.5,939.5 153.5,954.5 167.5,966.5 181.5,974.5 195.5,982.5 209.5,985.5 223.5,985.5 237.5,981.5 251.5,980.5 265.5,972.5 279.5,966.5 293.5,967.5 307.5,972.5 321.5,977.5 335.5,972.5 349.5,974.5 363.5,978.5 376.5,982.5 390.5,985.5 404.5,987.5 418.5,990.5 432.5,989.5 446.5,986.5 460.5,984.5 474.5,977.5 488.5,972.5 502.5,965.5 516.5,953.5 530.5,943.5 544.5,936.5 558.5,926.5 572.5,911.5 586.5,905.5 600.5,898.5 613.5,911.5 627.5,916.5 641.5,917.5 655.5,913.5 669.5,907.5 683.5,895.5 697.5,882.5 711.5,873.5 725.5,876.5 739.5,877.5 753.5,875.5 767.5,875.5 781.5,875.5 795.5,878.5 809.5,879.5 823.5,877.5 837.5,872.5 850.5,868.5 864.5,866.5 878.5,870.5 892.5,876.5 906.5,884.5 920.5,895.5 934.5,911.5 948.5,916.5 962.5,928.5 976.5,938.5 990.5,960.5 1004.5,982.5 1018.5,994.5 1032.5,996.5 1046.5,1002.5 1060.5,1003.5 1074.5,1006.5 1087.5,1006.5 1101.5,1005.5 1115.5,1001.5 1129.5,994.5 1143.5,989.5 1157.5,988.5 1171.5,983.5 1185.5,980.5 1199.5,977.5 1213.5,971.5 1227.5,960.5 1241.5,954.5 1255.5,937.5 1269.5,924.5 1283.5,912.5 1297.5,896.5 1311.5,883.5 1324.5,885.5 1338.5,891.5 1352.5,883.5 1366.5,882.5 1380.5,879.5 1394.5,868.5 1408.5,862.5 1422.5,852.5 1436.5,845.5 1450.5,815.5 1464.5,791.5 1478.5,776.5 1492.5,774.5 1506.5,769.5 1520.5,759.5 1534.5,748.5 1547.5,744.5 1561.5,741.5 1575.5,751.5 1589.5,773.5 1603.5,792.5 1617.5,815.5 1631.5,848.5 1645.5,880.5 1659.5,896.5 1673.5,922.5 1687.5,947.5 1701.5,966.5 1715.5,982.5 1729.5,991.5 1743.5,1002.5 1757.5,1015.5 1771.5,1023.5 1784.5,1026.5 1798.5,1028.5 1812.5,1030.5 1826.5,1026.5 1840.5,1015.5 1854.5,1003.5 1868.5,993.5 1882.5,987.5 1896.5,975.5 1910.5,978.5 1924.5,992.5 1938.5,995.5 1952.5,1005.5 1966.5,1008.5 1980.5,997.5 1994.5,982.5 2008.5,971.5" fill="none" stroke="#000080" stroke-width="1" shape-rendering="crispEdges"/>
<path d="M322 989h1v1h-1zM328 989h1v1h-1zM336 989h1v1h-1zM339 989h1v1h-1zM322 990h1v1h-1zM326 990h6v1h-6zM336 990h1v1h-1zM339 990h1v1h-1zM322 991h4v1h-4zM328 991h1v1h-1zM335 991h1v1h-1zM339 991h1v1h-1zM342 991h1v1h-1zM321 992h1v1h-1zM326 992h1v1h-1zM328 992h1v1h-1zM330 992h1v1h-1zM335 992h1v1h-1zM339 992h1v1h-1zM341 992h1v1h-1zM321 993h6v1h-6zM328 993h1v1h-1zM330 993h1v1h-1zM334 993h2v1h-2zM339 993h2v1h-2zM323 994h1v1h-1zM326 994h1v1h-1zM328 994h1v1h-1zM330 994h1v1h-1zM333 994h1v1h-1zM335 994h1v1h-1zM339 994h1v1h-1zM321 995h10v1h-10zM335 995h1v1h-1zM338 995h2v1h-2zM323 996h1v1h-1zM328 996h1v1h-1zM335 996h1v1h-1zM337 996h1v1h-1zM339 996h1v1h-1zM323 997h1v1h-1zM325 997h1v1h-1zM328 997h1v1h-1zM331 997h1v1h-1zM335 997h1v1h-1zM339 997h1v1h-1zM343 997h1v1h-1zM323 998h2v1h-2zM328 998h1v1h-1zM331 998h1v1h-1zM335 998h1v1h-1zM339 998h1v1h-1zM343 998h1v1h-1zM323 999h1v1h-1zM329 999h3v1h-3zM335 999h1v1h-1zM340 999h4v1h-4z" fill="#ff0000" shape-rendering="crispEdges"/>
<path d="M337 977h1v1h-1zM342 977h1v1h-1zM349 977h1v1h-1zM353 977h1v1h-1zM360 977h6v1h-6zM369 977h1v1h-1zM377 977h1v1h-1zM379 977h1v1h-1zM337 978h1v1h-1zM342 978h1v1h-1zM349 978h1v1h-1zM353 978h1v1h-1zM361 978h1v1h-1zM364 978h1v1h-1zM368 978h1v1h-1zM377 978h1v1h-1zM380 978h1v1h-1zM336 979h1v1h-1zM339 979h7v1h-7zM347 979h5v1h-5zM353 979h5v1h-5zM361 979h1v1h-1zM364 979h1v1h-1zM367 979h1v1h-1zM372 979h10v1h-10zM336 980h1v1h-1zM338 980h1v1h-1zM342 980h1v1h-1zM349 980h1v1h-1zM352 980h1v1h-1zM357 980h1v1h-1zM361 980h1v1h-1zM364 980h1v1h-1zM369 980h1v1h-1zM372 980h1v1h-1zM377 980h1v1h-1zM335 981h3v1h-3zM340 981h5v1h-5zM349 981h1v1h-1zM353 981h1v1h-1zM357 981h1v1h-1zM359 981h7v1h-7zM368 981h1v1h-1zM372 981h1v1h-1zM377 981h1v1h-1zM337 982h1v1h-1zM348 982h3v1h-3zM353 982h1v1h-1zM357 982h1v1h-1zM361 982h1v1h-1zM364 982h1v1h-1zM367 982h1v1h-1zM372 982h4v1h-4zM377 982h1v1h-1zM380 982h1v1h-1zM336 983h1v1h-1zM340 983h5v1h-5zM348 983h2v1h-2zM351 983h2v1h-2zM355 983h1v1h-1zM357 983h1v1h-1zM361 983h1v1h-1zM364 983h1v1h-1zM366 983h1v1h-1zM372 983h1v1h-1zM375 983h1v1h-1zM377 983h1v1h-1zM380 983h1v1h-1zM335 984h4v1h-4zM340 984h1v1h-1zM344 984h1v1h-1zM347 984h1v1h-1zM349 984h1v1h-1zM352 984h4v1h-4zM357 984h1v1h-1zM361 984h1v1h-1zM364 984h1v1h-1zM369 984h1v1h-1zM372 984h1v1h-1zM375 984h1v1h-1zM377 984h1v1h-1zM379 984h1v1h-1zM339 985h2v1h-2zM344 985h1v1h-1zM349 985h1v1h-1zM355 985h1v1h-1zM357 985h1v1h-1zM361 985h1v1h-1zM364 985h1v1h-1zM368 985h1v1h-1zM372 985h1v1h-1zM375 985h1v1h-1zM378 985h1v1h-1zM381 985h1v1h-1zM337 986h2v1h-2zM340 986h5v1h-5zM349 986h1v1h-1zM357 986h1v1h-1zM360 986h1v1h-1zM364 986h1v1h-1zM367 986h1v1h-1zM372 986h1v1h-1zM374 986h1v1h-1zM377 986h1v1h-1zM379 986h1v1h-1zM381 986h1v1h-1zM335 987h2v1h-2zM340 987h1v1h-1zM344 987h1v1h-1zM349 987h1v1h-1zM355 987h2v1h-2zM359 987h1v1h-1zM364 987h3v1h-3zM371 987h1v1h-1zM376 987h1v1h-1zM380 987h2v1h-2z" fill="#ff00ff" shape-rendering="crispEdges"/>
<path d="M963 984h1v1h-1zM969 984h1v1h-1zM977 984h1v1h-1zM980 984h1v1h-1zM963 985h1v1h-1zM967 985h6v1h-6zM977 985h1v1h-1zM980 985h1v1h-1zM963 986h4v1h-4zM969 986h1v1h-1zM976 986h1v1h-1zM980 986h1v1h-1zM983 986h1v1h-1zM962 987h1v1h-1zM967 987h1v1h-1zM969 987h1v1h-1zM971 987h1v1h-1zM976 987h1v1h-1zM980 987h1v1h-1zM982 987h1v1h-1zM962 988h6v1h-6zM969 988h1v1h-1zM971 988h1v1h-1zM975 988h2v1h-2zM980 988h2v1h-2zM964 989h1v1h-1zM967 989h1v1h-1zM969 989h1v1h-1zM971 989h1v1h-1zM974 989h1v1h-1zM976 989h1v1h-1zM980 989h1v1h-1zM962 990h10v1h-10zM976 990h1v1h-1zM979 990h2v1h-2zM964 991h1v1h-1zM969 991h1v1h-1zM976 991h1v1h-1zM978 991h1v1h-1zM980 991h1v1h-1zM964 992h1v1h-1zM966 992h1v1h-1zM969 992h1v1h-1zM972 992h1v1h-1zM976 992h1v1h-1zM980 992h1v1h-1zM984 992h1v1h-1zM964 993h2v1h-2zM969 993h1v1h-1zM972 993h1v1h-1zM976 993h1v1h-1zM980 993h1v1h-1zM984 993h1v1h-1zM964 994h1v1h-1zM970 994h3v1h-3zM976 994h1v1h-1zM981 994h4v1h-4z" fill="#ff0000" shape-rendering="crispEdges"/>
<path d="M1982 1005h1v1h-1zM1987 1005h1v1h-1zM1994 1005h1v1h-1zM1998 1005h1v1h-1zM2005 1005h6v1h-6zM2014 1005h1v1h-1zM2022 1005h1v1h-1zM2024 1005h1v1h-1zM1982 1006h1v1h-1zM1987 1006h1v1h-1zM1994 1006h1v1h-1zM1998 1006h1v1h-1zM2006 1006h1v1h-1zM2009 1006h1v1h-1zM2013 1006h1v1h-1zM2022 1006h1v1h-1zM2025 1006h1v1h-1zM1981 1007h1v1h-1zM1984 1007h7v1h-7zM1992 1007h5v1h-5zM1998 1007h5v1h-5zM2006 1007h1v1h-1zM2009 1007h1v1h-1zM2012 1007h1v1h-1zM2017 1007h10v1h-10zM1981 1008h1v1h-1zM1983 1008h1v1h-1zM1987 1008h1v1h-1zM1994 1008h1v1h-1zM1997 1008h1v1h-1zM2002 1008h1v1h-1zM2006 1008h1v1h-1zM2009 1008h1v1h-1zM2014 1008h1v1h-1zM2017 1008h1v1h-1zM2022 1008h1v1h-1zM1980 1009h3v1h-3zM1985 1009h5v1h-5zM1994 1009h1v1h-1zM1998 1009h1v1h-1zM2002 1009h1v1h-1zM2004 1009h7v1h-7zM2013 1009h1v1h-1zM2017 1009h1v1h-1zM2022 1009h1v1h-1zM1982 1010h1v1h-1zM1993 1010h3v1h-3zM1998 1010h1v1h-1zM2002 1010h1v1h-1zM2006 1010h1v1h-1zM2009 1010h1v1h-1zM2012 1010h1v1h-1zM2017 1010h4v1h-4zM2022 1010h1v1h-1zM2025 1010h1v1h-1zM1981 1011h1v1h-1zM1985 1011h5v1h-5zM1993 1011h2v1h-2zM1996 1011h2v1h-2zM2000 1011h1v1h-1zM2002 1011h1v1h-1zM2006 1011h1v1h-1zM2009 1011h1v1h-1zM2011 1011h1v1h-1zM2017 1011h1v1h-1zM2020 1011h1v1h-1zM2022 1011h1v1h-1zM2025 1011h1v1h-1zM1980 1012h4v1h-4zM1985 1012h1v1h-1zM1989 1012h1v1h-1zM1992 1012h1v1h-1zM1994 1012h1v1h-1zM1997 1012h4v1h-4zM2002 1012h1v1h-1zM2006 1012h1v1h-1zM2009 1012h1v1h-1zM2014 1012h1v1h-1zM2017 1012h1v1h-1zM2020 1012h1v1h-1zM2022 1012h1v1h-1zM2024 1012h1v1h-1zM1984 1013h2v1h-2zM1989 1013h1v1h-1zM1994 1013h1v1h-1zM2000 1013h1v1h-1zM2002 1013h1v1h-1zM2006 1013h1v1h-1zM2009 1013h1v1h-1zM2013 1013h1v1h-1zM2017 1013h1v1h-1zM2020 1013h1v1h-1zM2023 1013h1v1h-1zM2026 1013h1v1h-1zM1982 1014h2v1h-2zM1985 1014h5v1h-5zM1994 1014h1v1h-1zM2002 1014h1v1h-1zM2005 1014h1v1h-1zM2009 1014h1v1h-1zM2012 1014h1v1h-1zM2017 1014h1v1h-1zM2019 1014h1v1h-1zM2022 1014h1v1h-1zM2024 1014h1v1h-1zM2026 1014h1v1h-1zM1980 1015h2v1h-2zM1985 1015h1v1h-1zM1989 1015h1v1h-1zM1994 1015h1v1h-1zM2000 1015h2v1h-2zM2004 1015h1v1h-1zM2009 1015h3v1h-3zM2016 1015h1v1h-1zM2021 1015h1v1h-1zM2025 1015h2v1h-2z" fill="#ff00ff" shape-rendering="crispEdges"/>
<path d="M1953 1028h1v1h-1zM1959 1028h1v1h-1zM1967 1028h1v1h-1zM1970 1028h1v1h-1zM1953 1029h1v1h-1zM1957 1029h6v1h-6zM1967 1029h1v1h-1zM1970 1029h1v1h-1zM1953 1030h4v1h-4zM1959 1030h1v1h-1zM1966 1030h1v1h-1zM1970 1030h1v1h-1zM1973 1030h1v1h-1zM1952 1031h1v1h-1zM1957 1031h1v1h-1zM1959 1031h1v1h-1zM1961 1031h1v1h-1zM1966 1031h1v1h-1zM1970 1031h1v1h-1zM1972 1031h1v1h-1zM1952 1032h6v1h-6zM1959 1032h1v1h-1zM1961 1032h1v1h-1zM1965 1032h2v1h-2zM1970 1032h2v1h-2zM1954 1033h1v1h-1zM1957 1033h1v1h-1zM1959 1033h1v1h-1zM1961 1033h1v1h-1zM1964 1033h1v1h-1zM1966 1033h1v1h-1zM1970 1033h1v1h-1zM1952 1034h10v1h-10zM1966 1034h1v1h-1zM1969 1034h2v1h-2zM1954 1035h1v1h-1zM1959 1035h1v1h-1zM1966 1035h1v1h-1zM1968 1035h1v1h-1zM1970 1035h1v1h-1zM1954 1036h1v1h-1zM1956 1036h1v1h-1zM1959 1036h1v1h-1zM1962 1036h1v1h-1zM1966 1036h1v1h-1zM1970 1036h1v1h-1zM1974 1036h1v1h-1zM1954 1037h2v1h-2zM1959 1037h1v1h-1zM1962 1037h1v1h-1zM1966 1037h1v1h-1zM1970 1037h1v1h-1zM1974 1037h1v1h-1zM1954 1038h1v1h-1zM1960 1038h3v1h-3zM1966 1038h1v1h-1zM1971 1038h4v1h-4z" fill="#ff0000" shape-rendering="crispEdges"/>
<path d="M1018 1083h1v1h-1zM1021 1083h1v1h-1zM1024 1083h1v1h-1zM1027 1083h1v1h-1zM1031 1083h1v1h-1zM1034 1083h1v1h-1zM1019 1084h1v1h-1zM1022 1084h1v1h-1zM1024 1084h1v1h-1zM1026 1084h1v1h-1zM1031 1084h1v1h-1zM1034 1084h1v1h-1zM1017 1085h1v1h-1zM1024 1085h1v1h-1zM1031 1085h8v1h-8zM1018 1086h1v1h-1zM1020 1086h1v1h-1zM1022 1086h6v1h-6zM1030 1086h1v1h-1zM1034 1086h1v1h-1zM1020 1087h1v1h-1zM1022 1087h1v1h-1zM1027 1087h1v1h-1zM1034 1087h1v1h-1zM1019 1088h1v1h-1zM1022 1088h6v1h-6zM1029 1088h11v1h-11zM1019 1089h1v1h-1zM1022 1089h1v1h-1zM1027 1089h1v1h-1zM1034 1089h1v1h-1zM1017 1090h2v1h-2zM1022 1090h6v1h-6zM1033 1090h1v1h-1zM1035 1090h1v1h-1zM1018 1091h1v1h-1zM1022 1091h1v1h-1zM1027 1091h1v1h-1zM1032 1091h1v1h-1zM1036 1091h1v1h-1zM1018 1092h1v1h-1zM1022 1092h1v1h-1zM1027 1092h1v1h-1zM1031 1092h1v1h-1zM1037 1092h1v1h-1zM1018 1093h1v1h-1zM1022 1093h1v1h-1zM1026 1093h2v1h-2zM1029 1093h2v1h-2zM1038 1093h2v1h-2z" fill="#ffff00" shape-rendering="crispEdges"/>
<ellipse cx="2028.5" cy="868" rx="60" ry="57.5" fill="none" stroke="#ff3333" stroke-width="3"/>
<polygon points="1706,1067 1967.5,1005 1967.5,1003.2 1983.3,1009.3 1970,1019 1969,1013 1707,1068" fill="#800080"/>
<rect x="2" y="1105" width="2145" height="1" fill="#808080"/>
<rect x="2146" y="1105" width="58" height="2" fill="#808080"/>
<rect x="2146" y="1105" width="2" height="9" fill="#808080"/>
<text x="3" y="1121" fill="#000000" font-size="14" textLength="68" lengthAdjust="spacing">KDJ(9,3,3)</text>
<text x="81" y="1121" fill="#000080" font-size="14" textLength="57" lengthAdjust="spacing">K 56.577</text>
<text x="153" y="1121" fill="#e64a0a" font-size="14" textLength="58" lengthAdjust="spacing">D 47.048</text>
<text x="227" y="1121" fill="#808080" font-size="14" textLength="55" lengthAdjust="spacing">J 75.635</text>
</svg></body></html>
